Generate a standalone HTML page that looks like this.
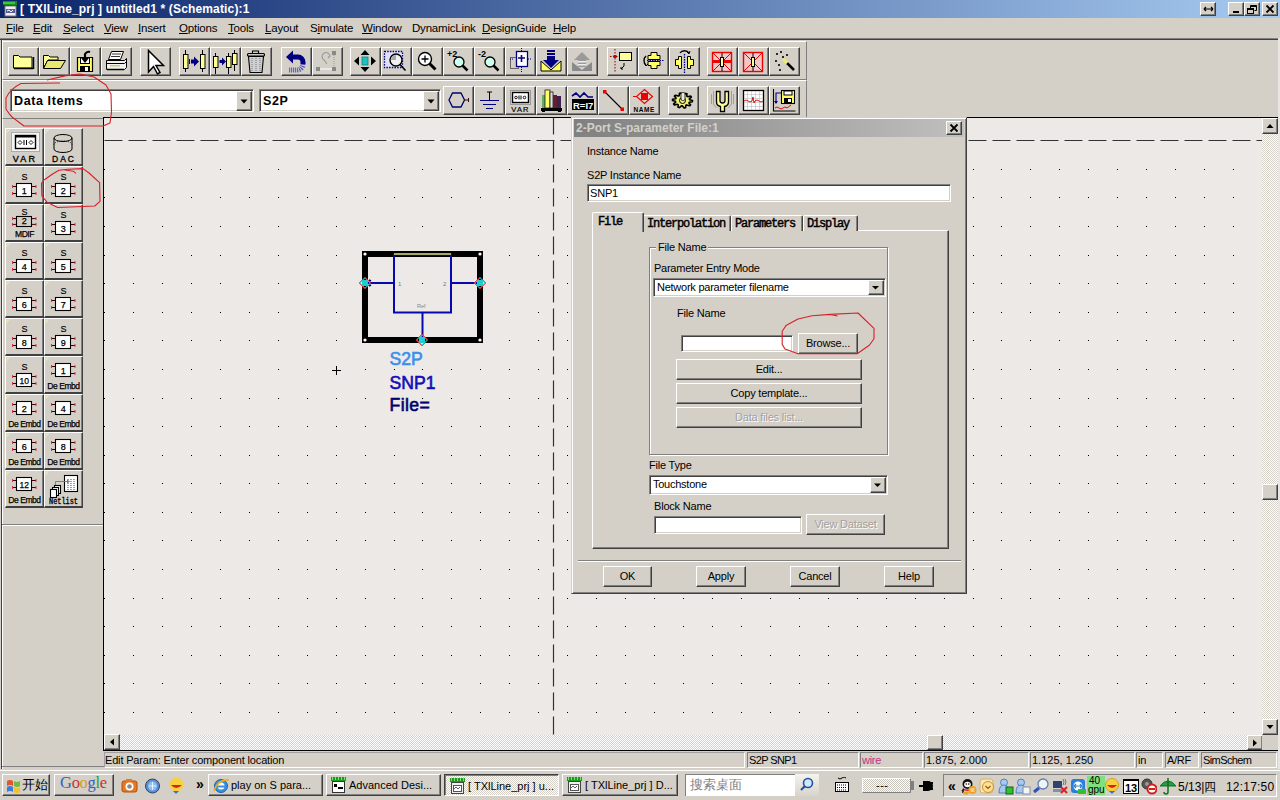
<!DOCTYPE html><html><head><meta charset="utf-8"><style>*{margin:0;padding:0;box-sizing:border-box}
html,body{width:1280px;height:800px;overflow:hidden;background:#D4D0C8;font-family:"Liberation Sans",sans-serif;font-size:11px;color:#000;position:relative}
.a{position:absolute}
u{text-decoration:underline;text-underline-offset:1px}
.sbtrack{background-color:#ECE9E6;background-image:repeating-conic-gradient(#fff 0 25%,#D4D0C8 0 50%);background-size:2px 2px}
</style></head><body><div class="a" style="left:0px;top:0px;width:1280px;height:18px;background:linear-gradient(to right,#0A246A,#A6CAF0);"></div><svg class="a" style="left:2px;top:1px;" width="16" height="16" viewBox="0 0 16 16"><rect x="1" y="0" width="14" height="4" fill="#1a8a1a"/><path d="M2,1 v2 M4,1 v2 M6,1 v2 M8,1 v2 M10,1 v2 M12,1 v2" stroke="#60ff60" stroke-width="1"/><rect x="3" y="5" width="11" height="10" fill="#eee" stroke="#777"/><rect x="4" y="8" width="9" height="4" fill="#5a5aa0"/><path d="M5,10 l2,-1 l2,2 l2,-2" stroke="#fff" fill="none"/></svg><div class="a" style="left:20px;top:3px;font-size:12px;color:#fff;white-space:nowrap;line-height:1;font-weight:bold;letter-spacing:0.15px">[ TXlLine_prj ] untitled1 * (Schematic):1</div><div class="a" style="left:1200px;top:2px;width:16px;height:14px;background:#D4D0C8;border-top:1px solid #fff;border-left:1px solid #fff;border-right:1px solid #404040;border-bottom:1px solid #404040;box-shadow:inset -1px -1px 0 #808080;"><svg class="a" style="left:1px;top:1px;" width="12" height="10" viewBox="0 0 12 10"><path d="M2,5 h9 M2,5 l2,-2 M2,5 l2,2 M11,5 l-2,-2 M11,5 l-2,2" stroke="#000" stroke-width="1.2" fill="none"/></svg></div><div class="a" style="left:1228px;top:2px;width:16px;height:14px;background:#D4D0C8;border-top:1px solid #fff;border-left:1px solid #fff;border-right:1px solid #404040;border-bottom:1px solid #404040;box-shadow:inset -1px -1px 0 #808080;"><svg class="a" style="left:1px;top:1px;" width="12" height="10" viewBox="0 0 12 10"><rect x="3" y="7" width="6" height="2" fill="#000"/></svg></div><div class="a" style="left:1244px;top:2px;width:16px;height:14px;background:#D4D0C8;border-top:1px solid #fff;border-left:1px solid #fff;border-right:1px solid #404040;border-bottom:1px solid #404040;box-shadow:inset -1px -1px 0 #808080;"><svg class="a" style="left:1px;top:1px;" width="12" height="10" viewBox="0 0 12 10"><path d="M4.5,1.5 h6 v5 h-2 M4.5,1.5 v2.5" stroke="#000" fill="none"/><rect x="4.5" y="1.5" width="6" height="1.5" fill="#000"/><rect x="1.5" y="4.5" width="6" height="5" fill="none" stroke="#000"/><rect x="1.5" y="4.5" width="6" height="1.5" fill="#000"/></svg></div><div class="a" style="left:1262px;top:2px;width:16px;height:14px;background:#D4D0C8;border-top:1px solid #fff;border-left:1px solid #fff;border-right:1px solid #404040;border-bottom:1px solid #404040;box-shadow:inset -1px -1px 0 #808080;"><svg class="a" style="left:1px;top:1px;" width="12" height="10" viewBox="0 0 12 10"><path d="M2.5,1.5 L9.5,8.5 M9.5,1.5 L2.5,8.5" stroke="#000" stroke-width="1.8"/></svg></div><div class="a" style="left:6px;top:23px;font-size:11.5px;color:#000;white-space:nowrap;line-height:1;letter-spacing:-0.2px"><u>F</u>ile</div><div class="a" style="left:33px;top:23px;font-size:11.5px;color:#000;white-space:nowrap;line-height:1;letter-spacing:-0.2px"><u>E</u>dit</div><div class="a" style="left:63px;top:23px;font-size:11.5px;color:#000;white-space:nowrap;line-height:1;letter-spacing:-0.2px"><u>S</u>elect</div><div class="a" style="left:104px;top:23px;font-size:11.5px;color:#000;white-space:nowrap;line-height:1;letter-spacing:-0.2px"><u>V</u>iew</div><div class="a" style="left:138px;top:23px;font-size:11.5px;color:#000;white-space:nowrap;line-height:1;letter-spacing:-0.2px"><u>I</u>nsert</div><div class="a" style="left:179px;top:23px;font-size:11.5px;color:#000;white-space:nowrap;line-height:1;letter-spacing:-0.2px"><u>O</u>ptions</div><div class="a" style="left:228px;top:23px;font-size:11.5px;color:#000;white-space:nowrap;line-height:1;letter-spacing:-0.2px"><u>T</u>ools</div><div class="a" style="left:265px;top:23px;font-size:11.5px;color:#000;white-space:nowrap;line-height:1;letter-spacing:-0.2px"><u>L</u>ayout</div><div class="a" style="left:310px;top:23px;font-size:11.5px;color:#000;white-space:nowrap;line-height:1;letter-spacing:-0.2px">S<u>i</u>mulate</div><div class="a" style="left:362px;top:23px;font-size:11.5px;color:#000;white-space:nowrap;line-height:1;letter-spacing:-0.2px"><u>W</u>indow</div><div class="a" style="left:412px;top:23px;font-size:11.5px;color:#000;white-space:nowrap;line-height:1;letter-spacing:-0.2px">DynamicLink</div><div class="a" style="left:482px;top:23px;font-size:11.5px;color:#000;white-space:nowrap;line-height:1;letter-spacing:-0.2px"><u>D</u>esignGuide</div><div class="a" style="left:553px;top:23px;font-size:11.5px;color:#000;white-space:nowrap;line-height:1;letter-spacing:-0.2px"><u>H</u>elp</div><div class="a" style="left:0px;top:38px;width:1278px;height:1px;background:#808080;"></div><div class="a" style="left:0px;top:39px;width:1278px;height:1px;background:#404040;"></div><div class="a" style="left:1278px;top:38px;width:2px;height:731px;background:#E8E6E2;"></div><div class="a" style="left:1px;top:39px;width:1px;height:730px;background:#404040;"></div><div class="a" style="left:2px;top:40px;width:1px;height:729px;background:#fff;"></div>
<div class="a" style="left:2px;top:41px;width:805px;height:39px;background:#D4D0C8;border-top:1px solid #fff;border-left:1px solid #fff;border-right:1px solid #404040;border-bottom:1px solid #404040;border-right:1px solid #808080;border-bottom:1px solid #808080;"></div><div class="a" style="left:2px;top:80px;width:805px;height:39px;background:#D4D0C8;border-top:1px solid #fff;border-left:1px solid #fff;border-right:1px solid #404040;border-bottom:1px solid #404040;border-right:1px solid #808080;border-bottom:1px solid #808080;"></div><div class="a" style="left:8px;top:47px;width:31px;height:29px;background:#D4D0C8;border-top:1px solid #fff;border-left:1px solid #fff;border-right:1px solid #404040;border-bottom:1px solid #404040;box-shadow:inset -1px -1px 0 #808080"></div><svg class="a" style="left:8px;top:47px;" width="31" height="29" viewBox="0 0 31 29"><path d="M5.5,8.5 h5 l1.5,1.5 h12 v11 h-18.5 z" fill="#FFFF99" stroke="#000"/><path d="M6,21.5 h19 M25.5,10 v12" stroke="#000" stroke-width="1.5"/></svg><div class="a" style="left:39px;top:47px;width:31px;height:29px;background:#D4D0C8;border-top:1px solid #fff;border-left:1px solid #fff;border-right:1px solid #404040;border-bottom:1px solid #404040;box-shadow:inset -1px -1px 0 #808080"></div><svg class="a" style="left:39px;top:47px;" width="31" height="29" viewBox="0 0 31 29"><path d="M4.5,8.5 h5 l1.5,1.5 h8 v3 h-10 l-4.5,8 z" fill="#FFFF99" stroke="#000"/><path d="M8.5,13.5 h18 l-5,8 h-17 z" fill="#E8E870" stroke="#000"/></svg><div class="a" style="left:70px;top:47px;width:31px;height:29px;background:#D4D0C8;border-top:1px solid #fff;border-left:1px solid #fff;border-right:1px solid #404040;border-bottom:1px solid #404040;box-shadow:inset -1px -1px 0 #808080"></div><svg class="a" style="left:70px;top:47px;" width="31" height="29" viewBox="0 0 31 29"><path d="M7.5,10.5 h15 v14 h-15 z" fill="#FFFF66" stroke="#000" stroke-width="1.2"/><rect x="10.5" y="10.5" width="9" height="6" fill="#fff" stroke="#000"/><rect x="10" y="19" width="10" height="6" fill="#000"/><rect x="15" y="20" width="3" height="4" fill="#fff"/><path d="M20,5 q-3,-1 -5,2 v5" stroke="#000" stroke-width="2.2" fill="none"/><path d="M11,11 l4,5 l4,-5 z" fill="#000"/></svg><div class="a" style="left:101px;top:47px;width:31px;height:29px;background:#D4D0C8;border-top:1px solid #fff;border-left:1px solid #fff;border-right:1px solid #404040;border-bottom:1px solid #404040;box-shadow:inset -1px -1px 0 #808080"></div><svg class="a" style="left:101px;top:47px;" width="31" height="29" viewBox="0 0 31 29"><path d="M10.5,4.5 h12 l-3,8 h-12 z" fill="#fff" stroke="#000"/><path d="M11,7 h9 M10,9.5 h9" stroke="#000" stroke-width="0.8"/><path d="M5.5,13.5 h18 l2,-2 v9 l-2,2 h-18 z" fill="#f0f0f0" stroke="#000"/><path d="M5.5,16.5 h18 l2,-2" stroke="#000" fill="none"/><rect x="9" y="18" width="10" height="1.5" fill="#c8c870"/><path d="M6,22.5 h17" stroke="#000" stroke-width="1.5"/></svg><div class="a" style="left:140px;top:47px;width:31px;height:29px;background:#D4D0C8;border-top:1px solid #fff;border-left:1px solid #fff;border-right:1px solid #404040;border-bottom:1px solid #404040;box-shadow:inset -1px -1px 0 #808080"></div><svg class="a" style="left:140px;top:47px;" width="31" height="29" viewBox="0 0 31 29"><path d="M8.5,3.5 V25 L13.5,19.5 L17.5,27 L20,25.5 L16,18.5 H23.5 Z" fill="#fff" stroke="#000" stroke-width="1.5" stroke-linejoin="miter"/></svg><div class="a" style="left:179px;top:47px;width:31px;height:29px;background:#D4D0C8;border-top:1px solid #fff;border-left:1px solid #fff;border-right:1px solid #404040;border-bottom:1px solid #404040;box-shadow:inset -1px -1px 0 #808080"></div><svg class="a" style="left:179px;top:47px;" width="31" height="29" viewBox="0 0 31 29"><path d="M6.5,3 v22 M23.5,3 v22" stroke="#000" stroke-width="1"/><rect x="4.5" y="7.5" width="4.5" height="14" fill="#FFFF99" stroke="#000"/><rect x="21.5" y="7.5" width="4.5" height="14" fill="#FFFF99" stroke="#000"/><path d="M10.5,12 v5" stroke="#000080" stroke-width="1"/><path d="M12,12.5 h3 v-3 l5,5 l-5,5 v-3 h-3 z" fill="#000080"/></svg><div class="a" style="left:210px;top:47px;width:31px;height:29px;background:#D4D0C8;border-top:1px solid #fff;border-left:1px solid #fff;border-right:1px solid #404040;border-bottom:1px solid #404040;box-shadow:inset -1px -1px 0 #808080"></div><svg class="a" style="left:210px;top:47px;" width="31" height="29" viewBox="0 0 31 29"><path d="M5.5,6 v21 M18.5,6 v21 M24.5,3 v21" stroke="#000" stroke-width="1"/><rect x="3.5" y="9.5" width="4.5" height="11" fill="#FFFF99" stroke="#000"/><rect x="16.5" y="9.5" width="4.5" height="11" fill="#FFFF99" stroke="#000"/><rect x="22.5" y="6.5" width="4.5" height="11" fill="#FFFF99" stroke="#000"/><path d="M9.5,13 h2.5 v-2.5 l4,4 l-4,4 v-2.5 h-2.5 z" fill="#000080"/></svg><div class="a" style="left:241px;top:47px;width:31px;height:29px;background:#D4D0C8;border-top:1px solid #fff;border-left:1px solid #fff;border-right:1px solid #404040;border-bottom:1px solid #404040;box-shadow:inset -1px -1px 0 #808080"></div><svg class="a" style="left:241px;top:47px;" width="31" height="29" viewBox="0 0 31 29"><path d="M11.5,6.5 v-2.5 h6 v2.5" fill="none" stroke="#000" stroke-width="1.1"/><rect x="6.5" y="6.5" width="17" height="2.5" rx="1" fill="#ccc" stroke="#000" stroke-width="1.1"/><path d="M7.5,9.5 h15 l-1.5,16 h-12 z" fill="#d0d0d0" stroke="#000" stroke-width="1.1"/><path d="M11,11 v13 M15,11 v13 M19,11 v13" stroke="#777" stroke-dasharray="1,1"/></svg><div class="a" style="left:281px;top:47px;width:31px;height:29px;background:#D4D0C8;border-top:1px solid #fff;border-left:1px solid #fff;border-right:1px solid #404040;border-bottom:1px solid #404040;box-shadow:inset -1px -1px 0 #808080"></div><svg class="a" style="left:281px;top:47px;" width="31" height="29" viewBox="0 0 31 29"><path d="M5,10 L12,3.5 V16.5 Z" fill="#000080"/><path d="M11,10 H17 A5,5 0 0 1 22,15 V17" stroke="#000080" stroke-width="5" fill="none"/><path d="M22,17 A6,6 0 0 1 16,23 H8" stroke="#5050B8" stroke-width="5" fill="none" stroke-dasharray="1,1"/></svg><div class="a" style="left:312px;top:47px;width:31px;height:29px;background:#D4D0C8;border-top:1px solid #fff;border-left:1px solid #fff;border-right:1px solid #404040;border-bottom:1px solid #404040;box-shadow:inset -1px -1px 0 #808080"></div><svg class="a" style="left:312px;top:47px;" width="31" height="29" viewBox="0 0 31 29"><rect x="20" y="4" width="4" height="4" fill="#888"/><rect x="4" y="20" width="4" height="4" fill="#888"/><rect x="20" y="20" width="4" height="4" fill="#888"/><path d="M8,22 h12" stroke="#fff" stroke-width="1"/><path d="M22,8 v12" stroke="#999" stroke-dasharray="1,1"/><path d="M15,17 l-3,-4 a4,4 0 1 1 6,-4 l-2,2" stroke="#999" fill="none" stroke-width="1.1"/></svg><div class="a" style="left:350px;top:47px;width:31px;height:29px;background:#D4D0C8;border-top:1px solid #fff;border-left:1px solid #fff;border-right:1px solid #404040;border-bottom:1px solid #404040;box-shadow:inset -1px -1px 0 #808080"></div><svg class="a" style="left:350px;top:47px;" width="31" height="29" viewBox="0 0 31 29"><rect x="12" y="10" width="6" height="8" fill="#20C0C0" stroke="#088" stroke-width="0.8"/><path d="M15,3 l-4.5,5 h9 z M15,25 l-4.5,-5 h9 z M4,14 l5,-4.5 v9 z M26,14 l-5,-4.5 v9 z" fill="#000"/></svg><div class="a" style="left:381px;top:47px;width:31px;height:29px;background:#D4D0C8;border-top:1px solid #fff;border-left:1px solid #fff;border-right:1px solid #404040;border-bottom:1px solid #404040;box-shadow:inset -1px -1px 0 #808080"></div><svg class="a" style="left:381px;top:47px;" width="31" height="29" viewBox="0 0 31 29"><rect x="3.5" y="4.5" width="18" height="16" fill="#E0E0F8" stroke="#000080" stroke-width="1.3" stroke-dasharray="1.5,1.2"/><circle cx="15" cy="13" r="6" fill="#f0f0f0" stroke="#000" stroke-width="1.4"/><path d="M15,8 a5,5 0 0 0 -5,5 h5 z" fill="#aaa"/><path d="M19,17.5 l5.5,6" stroke="#000" stroke-width="1.6"/></svg><div class="a" style="left:412px;top:47px;width:31px;height:29px;background:#D4D0C8;border-top:1px solid #fff;border-left:1px solid #fff;border-right:1px solid #404040;border-bottom:1px solid #404040;box-shadow:inset -1px -1px 0 #808080"></div><svg class="a" style="left:412px;top:47px;" width="31" height="29" viewBox="0 0 31 29"><circle cx="13" cy="12" r="6.5" fill="#fff" stroke="#000" stroke-width="1.4"/><path d="M9.5,12 h7 M13,8.5 v7" stroke="#000" stroke-width="1.3"/><path d="M17.5,16.5 l6,6" stroke="#000" stroke-width="3"/></svg><div class="a" style="left:443px;top:47px;width:31px;height:29px;background:#D4D0C8;border-top:1px solid #fff;border-left:1px solid #fff;border-right:1px solid #404040;border-bottom:1px solid #404040;box-shadow:inset -1px -1px 0 #808080"></div><svg class="a" style="left:443px;top:47px;" width="31" height="29" viewBox="0 0 31 29"><text x="4" y="10" font-size="9" font-family="Liberation Sans" font-weight="bold">+2</text><circle cx="16" cy="15" r="5" fill="#cfe" stroke="#000" stroke-width="1.3"/><path d="M19.5,18.5 l5,5" stroke="#000" stroke-width="2.5"/></svg><div class="a" style="left:474px;top:47px;width:31px;height:29px;background:#D4D0C8;border-top:1px solid #fff;border-left:1px solid #fff;border-right:1px solid #404040;border-bottom:1px solid #404040;box-shadow:inset -1px -1px 0 #808080"></div><svg class="a" style="left:474px;top:47px;" width="31" height="29" viewBox="0 0 31 29"><text x="4" y="10" font-size="9" font-family="Liberation Sans" font-weight="bold">-2</text><circle cx="16" cy="15" r="5" fill="#cfe" stroke="#000" stroke-width="1.3"/><path d="M19.5,18.5 l5,5" stroke="#000" stroke-width="2.5"/></svg><div class="a" style="left:505px;top:47px;width:31px;height:29px;background:#D4D0C8;border-top:1px solid #fff;border-left:1px solid #fff;border-right:1px solid #404040;border-bottom:1px solid #404040;box-shadow:inset -1px -1px 0 #808080"></div><svg class="a" style="left:505px;top:47px;" width="31" height="29" viewBox="0 0 31 29"><rect x="5.5" y="10.5" width="8" height="11" fill="none" stroke="#000" stroke-dasharray="1,1"/><rect x="11.5" y="4.5" width="11" height="15" fill="#fff" stroke="#000080" stroke-width="1.3"/><path d="M13,11 h7 M16.5,8 v7" stroke="#000080" stroke-width="1.6"/><path d="M5,12 h4 M16.5,1 v3 M16.5,20 v5 M23,12 h3" stroke="#000080" stroke-dasharray="1,1"/></svg><div class="a" style="left:536px;top:47px;width:31px;height:29px;background:#D4D0C8;border-top:1px solid #fff;border-left:1px solid #fff;border-right:1px solid #404040;border-bottom:1px solid #404040;box-shadow:inset -1px -1px 0 #808080"></div><svg class="a" style="left:536px;top:47px;" width="31" height="29" viewBox="0 0 31 29"><path d="M5,14 l10,9 l10,-9 v10 h-20 z" fill="#FFFF66" stroke="#000"/><rect x="11" y="3" width="8" height="2" fill="#000080"/><rect x="11" y="6" width="8" height="2" fill="#000080"/><path d="M11,9 h8 v4 h4 l-8,8 l-8,-8 h4 z" fill="#000080"/></svg><div class="a" style="left:567px;top:47px;width:31px;height:29px;background:#D4D0C8;border-top:1px solid #fff;border-left:1px solid #fff;border-right:1px solid #404040;border-bottom:1px solid #404040;box-shadow:inset -1px -1px 0 #808080"></div><svg class="a" style="left:567px;top:47px;" width="31" height="29" viewBox="0 0 31 29"><path d="M5,15 l10,8 l10,-8 v9 h-20 z" fill="#8a8a8a"/><path d="M11,20 h8 v-7 h4 l-8,-8 l-8,8 h4 z" fill="#9a9a9a"/><rect x="11" y="14" width="8" height="1.5" fill="#eee"/><rect x="11" y="17" width="8" height="1.5" fill="#eee"/></svg><div class="a" style="left:607px;top:47px;width:31px;height:29px;background:#D4D0C8;border-top:1px solid #fff;border-left:1px solid #fff;border-right:1px solid #404040;border-bottom:1px solid #404040;box-shadow:inset -1px -1px 0 #808080"></div><svg class="a" style="left:607px;top:47px;" width="31" height="29" viewBox="0 0 31 29"><path d="M8,2 v24" stroke="#800" stroke-dasharray="1.5,1.5"/><path d="M3,9.5 h9" stroke="#800" stroke-dasharray="1.5,1.5"/><rect x="6.5" y="8" width="3" height="3" fill="#c00"/><rect x="12.5" y="5.5" width="12" height="8" fill="#FFFF99" stroke="#000"/><path d="M17,16 v3 l-3,3 M14,20 v2 h2" stroke="#000" fill="none"/></svg><div class="a" style="left:638px;top:47px;width:31px;height:29px;background:#D4D0C8;border-top:1px solid #fff;border-left:1px solid #fff;border-right:1px solid #404040;border-bottom:1px solid #404040;box-shadow:inset -1px -1px 0 #808080"></div><svg class="a" style="left:638px;top:47px;" width="31" height="29" viewBox="0 0 31 29"><path d="M13,5.5 h6 v3 h3 v4 h-12 v-4 h3 z M13,21.5 h6 v-3 h3 v-4 h-12 v4 h3 z" fill="#FFFF66" stroke="#000"/><path d="M9,13.5 h17" stroke="#000080" stroke-dasharray="1.5,1"/><path d="M8,9 a6,6 0 0 0 0,9" stroke="#000" stroke-width="1.4" fill="none"/><path d="M6,16 l2,3 l2,-2" fill="none" stroke="#000"/></svg><div class="a" style="left:669px;top:47px;width:31px;height:29px;background:#D4D0C8;border-top:1px solid #fff;border-left:1px solid #fff;border-right:1px solid #404040;border-bottom:1px solid #404040;box-shadow:inset -1px -1px 0 #808080"></div><svg class="a" style="left:669px;top:47px;" width="31" height="29" viewBox="0 0 31 29"><path d="M6.5,12.5 h3 v-3 h3 v12 h-3 v-3 h-3 z M24.5,12.5 h-3 v-3 h-3 v12 h3 v-3 h3 z" fill="#FFFF66" stroke="#000"/><path d="M15.5,7 v19" stroke="#000080" stroke-width="1.3" stroke-dasharray="1.5,1"/><path d="M11,6 a5,4 0 0 1 9,0" stroke="#000" fill="none" stroke-width="1.3"/><path d="M18,5 l2,2 l1,-3" fill="none" stroke="#000"/></svg><div class="a" style="left:707px;top:47px;width:31px;height:29px;background:#D4D0C8;border-top:1px solid #fff;border-left:1px solid #fff;border-right:1px solid #404040;border-bottom:1px solid #404040;box-shadow:inset -1px -1px 0 #808080"></div><svg class="a" style="left:707px;top:47px;" width="31" height="29" viewBox="0 0 31 29"><rect x="5.5" y="5.5" width="19" height="19" fill="#f0c8c8" stroke="#e00" stroke-width="1.4"/><path d="M6,6 L24,24 M24,6 L6,24" stroke="#e00"/><rect x="6" y="13" width="18" height="3" fill="#e00"/><path d="M15,6 v18" stroke="#000"/><rect x="13.5" y="10.5" width="3" height="9" fill="#FFFF99" stroke="#000"/></svg><div class="a" style="left:738px;top:47px;width:31px;height:29px;background:#D4D0C8;border-top:1px solid #fff;border-left:1px solid #fff;border-right:1px solid #404040;border-bottom:1px solid #404040;box-shadow:inset -1px -1px 0 #808080"></div><svg class="a" style="left:738px;top:47px;" width="31" height="29" viewBox="0 0 31 29"><rect x="5.5" y="5.5" width="19" height="19" fill="#f0c8c8" stroke="#e00" stroke-width="1.4"/><path d="M6,6 L24,24 M24,6 L6,24" stroke="#e00"/><path d="M15,6 v18" stroke="#000"/><rect x="13.5" y="10.5" width="3" height="9" fill="#FFFF99" stroke="#000"/></svg><div class="a" style="left:769px;top:47px;width:31px;height:29px;background:#D4D0C8;border-top:1px solid #fff;border-left:1px solid #fff;border-right:1px solid #404040;border-bottom:1px solid #404040;box-shadow:inset -1px -1px 0 #808080"></div><svg class="a" style="left:769px;top:47px;" width="31" height="29" viewBox="0 0 31 29"><path d="M18,16 l7,7" stroke="#000" stroke-width="2.5"/><path d="M14,12 l4,4" stroke="#ee6" stroke-width="3"/><path d="M8,6 l1,1 l-1,1 l-1,-1 z M12,4 l1,1 l-1,1 l-1,-1 z M18,7 l1,1 l-1,1 l-1,-1 z M7,13 l1,1 l-1,1 l-1,-1 z M10,17 l1,1 l-1,1 l-1,-1 z M11,22 l1,1 l-1,1 l-1,-1 z M14,9 l1,1 l-1,1 l-1,-1 z" fill="none" stroke="#000" stroke-width="0.8"/></svg><div class="a" style="left:10px;top:89px;width:244px;height:23px;background:#fff;border-top:1px solid #808080;border-left:1px solid #808080;border-right:1px solid #fff;border-bottom:1px solid #fff;box-shadow:inset 1px 1px 0 #404040,inset -1px -1px 0 #D4D0C8;"></div><div class="a" style="left:14px;top:95px;font-size:12.5px;color:#000;white-space:nowrap;line-height:1;font-weight:bold;letter-spacing:0.6px">Data Items</div><div class="a" style="left:236px;top:91px;width:16px;height:20px;background:#D4D0C8;border-top:1px solid #fff;border-left:1px solid #fff;border-right:1px solid #404040;border-bottom:1px solid #404040;box-shadow:inset -1px -1px 0 #808080;"></div><svg class="a" style="left:236px;top:91px;" width="16" height="20" viewBox="0 0 16 20"><path d="M4.5,8.5 h7 l-3.5,4 z" fill="#000"/></svg><div class="a" style="left:259px;top:89px;width:182px;height:23px;background:#fff;border-top:1px solid #808080;border-left:1px solid #808080;border-right:1px solid #fff;border-bottom:1px solid #fff;box-shadow:inset 1px 1px 0 #404040,inset -1px -1px 0 #D4D0C8;"></div><div class="a" style="left:263px;top:95px;font-size:12.5px;color:#000;white-space:nowrap;line-height:1;font-weight:bold;letter-spacing:0.6px">S2P</div><div class="a" style="left:423px;top:91px;width:16px;height:20px;background:#D4D0C8;border-top:1px solid #fff;border-left:1px solid #fff;border-right:1px solid #404040;border-bottom:1px solid #404040;box-shadow:inset -1px -1px 0 #808080;"></div><svg class="a" style="left:423px;top:91px;" width="16" height="20" viewBox="0 0 16 20"><path d="M4.5,8.5 h7 l-3.5,4 z" fill="#000"/></svg><div class="a" style="left:443px;top:86px;width:31px;height:29px;background:#D4D0C8;border-top:1px solid #fff;border-left:1px solid #fff;border-right:1px solid #404040;border-bottom:1px solid #404040;box-shadow:inset -1px -1px 0 #808080"></div><svg class="a" style="left:443px;top:86px;" width="31" height="29" viewBox="0 0 31 29"><path d="M9.5,7 h8.5 l3.5,7 l-3.5,7 h-8.5 l-3.5,-7 z" fill="none" stroke="#000070" stroke-width="1.3"/><path d="M21.5,14 h4 M25.5,12 v4" stroke="#400" stroke-width="1"/></svg><div class="a" style="left:474px;top:86px;width:31px;height:29px;background:#D4D0C8;border-top:1px solid #fff;border-left:1px solid #fff;border-right:1px solid #404040;border-bottom:1px solid #404040;box-shadow:inset -1px -1px 0 #808080"></div><svg class="a" style="left:474px;top:86px;" width="31" height="29" viewBox="0 0 31 29"><path d="M15.5,6 v8 M13,6 h5" stroke="#000" stroke-width="1"/><path d="M6,14.5 h19 M9,18.5 h13 M12,22.5 h7" stroke="#000080" stroke-width="1.2"/></svg><div class="a" style="left:505px;top:86px;width:31px;height:29px;background:#D4D0C8;border-top:1px solid #fff;border-left:1px solid #fff;border-right:1px solid #404040;border-bottom:1px solid #404040;box-shadow:inset -1px -1px 0 #808080"></div><svg class="a" style="left:505px;top:86px;" width="31" height="29" viewBox="0 0 31 29"><rect x="5.5" y="4.5" width="20" height="14" fill="#ddd" stroke="#999"/><rect x="7.5" y="6.5" width="16" height="10" fill="#fff" stroke="#000" stroke-width="1.4"/><circle cx="11" cy="11.5" r="1.3" fill="none" stroke="#000" stroke-width="0.9"/><path d="M14,9.5 v4 M16,9.5 v4" stroke="#000" stroke-width="1"/><circle cx="19.5" cy="11.5" r="1.3" fill="none" stroke="#000" stroke-width="0.9"/><text x="15.5" y="26" font-size="7.5" font-family="Liberation Sans" text-anchor="middle" letter-spacing="1.2" stroke="#000" stroke-width="0.2">VAR</text></svg><div class="a" style="left:536px;top:86px;width:31px;height:29px;background:#D4D0C8;border-top:1px solid #fff;border-left:1px solid #fff;border-right:1px solid #404040;border-bottom:1px solid #404040;box-shadow:inset -1px -1px 0 #808080"></div><svg class="a" style="left:536px;top:86px;" width="31" height="29" viewBox="0 0 31 29"><rect x="5" y="22" width="21" height="3" fill="#000"/><rect x="6" y="24" width="3" height="2" fill="#000"/><rect x="22" y="24" width="3" height="2" fill="#000"/><rect x="6" y="9" width="3" height="13" fill="#6a6" /><rect x="9" y="4" width="5" height="18" fill="#FFFF66" stroke="#000" stroke-width="0.7"/><rect x="14" y="6" width="3" height="16" fill="#ddd" stroke="#000" stroke-width="0.7"/><rect x="17" y="9" width="4" height="13" fill="#602030"/><rect x="21" y="10" width="4" height="12" fill="#402050"/></svg><div class="a" style="left:567px;top:86px;width:31px;height:29px;background:#D4D0C8;border-top:1px solid #fff;border-left:1px solid #fff;border-right:1px solid #404040;border-bottom:1px solid #404040;box-shadow:inset -1px -1px 0 #808080"></div><svg class="a" style="left:567px;top:86px;" width="31" height="29" viewBox="0 0 31 29"><path d="M5,10 l4,-3 l4,4 l4,-4 l4,4 h5" stroke="#000080" stroke-width="1.6" fill="none"/><rect x="5" y="13" width="22" height="11" fill="#000"/><text x="6" y="22.5" font-size="9.5" font-family="Liberation Sans" fill="#fff" font-weight="bold">R=I7</text></svg><div class="a" style="left:598px;top:86px;width:31px;height:29px;background:#D4D0C8;border-top:1px solid #fff;border-left:1px solid #fff;border-right:1px solid #404040;border-bottom:1px solid #404040;box-shadow:inset -1px -1px 0 #808080"></div><svg class="a" style="left:598px;top:86px;" width="31" height="29" viewBox="0 0 31 29"><path d="M7,6 L24,23" stroke="#000" stroke-width="1.1"/><rect x="5" y="4" width="3.5" height="3.5" fill="#e00"/><rect x="22.5" y="21.5" width="3.5" height="3.5" fill="#e00"/></svg><div class="a" style="left:629px;top:86px;width:31px;height:29px;background:#D4D0C8;border-top:1px solid #fff;border-left:1px solid #fff;border-right:1px solid #404040;border-bottom:1px solid #404040;box-shadow:inset -1px -1px 0 #808080"></div><svg class="a" style="left:629px;top:86px;" width="31" height="29" viewBox="0 0 31 29"><path d="M15.5,3.5 l8,7 l-8,7 l-8,-7 z" fill="none" stroke="#e00" stroke-width="1.1"/><path d="M4,10.5 h4" stroke="#e00"/><rect x="12" y="7" width="7" height="7" fill="#e00"/><text x="4.5" y="26" font-size="6.5" font-family="Liberation Sans" font-weight="bold" letter-spacing="0.6">NAME</text></svg><div class="a" style="left:668px;top:86px;width:31px;height:29px;background:#D4D0C8;border-top:1px solid #fff;border-left:1px solid #fff;border-right:1px solid #404040;border-bottom:1px solid #404040;box-shadow:inset -1px -1px 0 #808080"></div><svg class="a" style="left:668px;top:86px;" width="31" height="29" viewBox="0 0 31 29"><path d="M24.5,14.5 L24.4,15.7 L21.3,16.2 L20.9,17.0 L22.6,18.9 L21.6,19.8 L18.7,18.9 L17.8,19.3 L17.6,21.6 L16.1,21.9 L14.5,19.9 L13.4,19.8 L11.4,21.6 L10.0,21.2 L10.3,18.9 L9.4,18.3 L6.4,18.9 L5.6,17.9 L7.7,16.2 L7.4,15.3 L4.5,14.5 L4.6,13.3 L7.7,12.8 L8.1,12.0 L6.4,10.1 L7.4,9.2 L10.3,10.1 L11.2,9.7 L11.4,7.4 L12.9,7.1 L14.5,9.1 L15.6,9.2 L17.6,7.4 L19.0,7.8 L18.7,10.1 L19.6,10.7 L22.6,10.1 L23.4,11.1 L21.3,12.8 L21.6,13.7 Z" fill="#F0F080" stroke="#000" stroke-width="1.6" stroke-linejoin="round"/><circle cx="14.5" cy="14.5" r="3" fill="none" stroke="#000" stroke-width="1"/><rect x="13" y="6.5" width="4" height="8" rx="1.5" fill="#e8e8e8" stroke="#000" stroke-width="0.8"/></svg><div class="a" style="left:707px;top:86px;width:31px;height:29px;background:#D4D0C8;border-top:1px solid #fff;border-left:1px solid #fff;border-right:1px solid #404040;border-bottom:1px solid #404040;box-shadow:inset -1px -1px 0 #808080"></div><svg class="a" style="left:707px;top:86px;" width="31" height="29" viewBox="0 0 31 29"><path d="M6.5,5 v13 l3,4 M24.5,5 v13 l-3,4 M4.5,8 v10 M26.5,8 v10" stroke="#999" fill="none" stroke-width="0.9"/><path d="M9.5,5.5 h3.5 v9 a2.5,2.5 0 0 0 5,0 v-9 h3.5 v10 a5,5 0 0 1 -4,5 v5 h-4 v-5 a5,5 0 0 1 -4,-5 z" fill="#FFFF99" stroke="#000" stroke-width="1.3"/></svg><div class="a" style="left:738px;top:86px;width:31px;height:29px;background:#D4D0C8;border-top:1px solid #fff;border-left:1px solid #fff;border-right:1px solid #404040;border-bottom:1px solid #404040;box-shadow:inset -1px -1px 0 #808080"></div><svg class="a" style="left:738px;top:86px;" width="31" height="29" viewBox="0 0 31 29"><rect x="5.5" y="4.5" width="20" height="20" fill="#fff" stroke="#000" stroke-width="1.3"/><path d="M9.5,5 v19 M6,8.5 h19" stroke="#bbb" stroke-width="0.6"/><path d="M13.5,5 v19 M6,12.5 h19" stroke="#bbb" stroke-width="0.6"/><path d="M17.5,5 v19 M6,16.5 h19" stroke="#bbb" stroke-width="0.6"/><path d="M21.5,5 v19 M6,20.5 h19" stroke="#bbb" stroke-width="0.6"/><path d="M6,15 q2,-2 4,0 t4,0 l1,-4 l1,6 l1,-2 q2,-2 4,0 t4,0" stroke="#c00" fill="none" stroke-width="0.9"/></svg><div class="a" style="left:769px;top:86px;width:31px;height:29px;background:#D4D0C8;border-top:1px solid #fff;border-left:1px solid #fff;border-right:1px solid #404040;border-bottom:1px solid #404040;box-shadow:inset -1px -1px 0 #808080"></div><svg class="a" style="left:769px;top:86px;" width="31" height="29" viewBox="0 0 31 29"><path d="M4.5,3 v22 h22" stroke="#000" fill="none" stroke-width="1.1"/><path d="M13,7 h-6 v10" stroke="#000080" fill="none" stroke-width="1.1"/><path d="M5,15 l2,3 l2,-3" fill="#000080"/><rect x="12.5" y="4.5" width="13" height="13" fill="#FFFF66" stroke="#000" stroke-width="1.1"/><rect x="15" y="5" width="8" height="4" fill="#fff" stroke="#000"/><rect x="15" y="12" width="8" height="5" fill="#000"/><rect x="19" y="13" width="3" height="3" fill="#fff"/><path d="M6,22 q2,-2 4,0 t4,0 t4,0 l4,-3" stroke="#e00" fill="none"/></svg>
<div class="a" style="left:5px;top:128px;width:39px;height:38px;background:#D4D0C8;border-top:1px solid #fff;border-left:1px solid #fff;border-right:1px solid #404040;border-bottom:2px solid #404040;box-shadow:inset -1px 0 0 #808080"></div><svg class="a" style="left:5px;top:128px;" width="39" height="38" viewBox="0 0 39 38"><path d="M1.5,1.5 h4 l-4,4 z" fill="#E4E4B8"/><rect x="6.5" y="4.5" width="28" height="19" fill="#f4f4f4" stroke="#aaa"/><rect x="10.5" y="7.5" width="20" height="13" fill="#fff" stroke="#000" stroke-width="1.4"/><rect x="10" y="7" width="21" height="2.5" fill="#000"/><path d="M13,14.5 l2,-2 l2,2 l-2,2 z M24,14.5 l2,-2 l2,2 l-2,2 z" fill="none" stroke="#000" stroke-width="0.9"/><path d="M19,12 v5 M21.5,12 v5" stroke="#000" stroke-width="1"/><text x="20" y="33.5" font-size="9" font-family="Liberation Sans" text-anchor="middle" letter-spacing="2.2" stroke="#000" stroke-width="0.35">VAR</text></svg><div class="a" style="left:44px;top:128px;width:39px;height:38px;background:#D4D0C8;border-top:1px solid #fff;border-left:1px solid #fff;border-right:1px solid #404040;border-bottom:2px solid #404040;box-shadow:inset -1px 0 0 #808080"></div><svg class="a" style="left:44px;top:128px;" width="39" height="38" viewBox="0 0 39 38"><path d="M1.5,1.5 h4 l-4,4 z" fill="#E4E4B8"/><ellipse cx="19" cy="10" rx="9" ry="3.5" fill="none" stroke="#000" stroke-width="1"/><path d="M10,10 v11 a9,3.5 0 0 0 18,0 v-11" fill="none" stroke="#000" stroke-width="1"/><path d="M10,16.5 a9,3.5 0 0 1 18,0" fill="none" stroke="#000" stroke-dasharray="1,1.2" stroke-width="0.9"/><text x="20" y="33.5" font-size="8.5" font-family="Liberation Sans" text-anchor="middle" letter-spacing="2" stroke="#000" stroke-width="0.3">DAC</text></svg><div class="a" style="left:5px;top:166px;width:39px;height:38px;background:#D4D0C8;border-top:1px solid #fff;border-left:1px solid #fff;border-right:1px solid #404040;border-bottom:2px solid #404040;box-shadow:inset -1px 0 0 #808080"></div><svg class="a" style="left:5px;top:166px;" width="39" height="38" viewBox="0 0 39 38"><path d="M1.5,1.5 h4 l-4,4 z" fill="#E4E4B8"/><text x="19.5" y="13.5" font-size="9" font-family="Liberation Sans" text-anchor="middle" stroke="#000" stroke-width="0.15">S</text><path d="M7.5,20.5 h4 M7.5,27.5 h4 M27,20.5 h4 M27,27.5 h4" stroke="#400" stroke-width="1"/><path d="M7.5,19.0 v3 M7.5,26.0 v3 M31,19.0 v3 M31,26.0 v3" stroke="#d03050" stroke-width="1"/><rect x="11.5" y="17.5" width="15" height="13" fill="#fff" stroke="#000" stroke-width="1.1"/><text x="19.2" y="27.5" font-size="9" font-family="Liberation Sans" text-anchor="middle" stroke="#000" stroke-width="0.25">1</text></svg><div class="a" style="left:44px;top:166px;width:39px;height:38px;background:#D4D0C8;border-top:1px solid #fff;border-left:1px solid #fff;border-right:1px solid #404040;border-bottom:2px solid #404040;box-shadow:inset -1px 0 0 #808080"></div><svg class="a" style="left:44px;top:166px;" width="39" height="38" viewBox="0 0 39 38"><path d="M1.5,1.5 h4 l-4,4 z" fill="#E4E4B8"/><text x="19.5" y="13.5" font-size="9" font-family="Liberation Sans" text-anchor="middle" stroke="#000" stroke-width="0.15">S</text><path d="M7.5,20.5 h4 M7.5,27.5 h4 M27,20.5 h4 M27,27.5 h4" stroke="#400" stroke-width="1"/><path d="M7.5,19.0 v3 M7.5,26.0 v3 M31,19.0 v3 M31,26.0 v3" stroke="#d03050" stroke-width="1"/><rect x="11.5" y="17.5" width="15" height="13" fill="#fff" stroke="#000" stroke-width="1.1"/><text x="19.2" y="27.5" font-size="9" font-family="Liberation Sans" text-anchor="middle" stroke="#000" stroke-width="0.25">2</text></svg><div class="a" style="left:5px;top:204px;width:39px;height:38px;background:#D4D0C8;border-top:1px solid #fff;border-left:1px solid #fff;border-right:1px solid #404040;border-bottom:2px solid #404040;box-shadow:inset -1px 0 0 #808080"></div><svg class="a" style="left:5px;top:204px;" width="39" height="38" viewBox="0 0 39 38"><path d="M1.5,1.5 h4 l-4,4 z" fill="#E4E4B8"/><text x="19.5" y="10.5" font-size="9" font-family="Liberation Sans" text-anchor="middle" stroke="#000" stroke-width="0.15">S</text><path d="M7.5,14.6 h4 M7.5,20.4 h4 M27,14.6 h4 M27,20.4 h4" stroke="#400" stroke-width="1"/><path d="M7.5,13.1 v3 M7.5,18.9 v3 M31,13.1 v3 M31,18.9 v3" stroke="#d03050" stroke-width="1"/><rect x="11.5" y="12.5" width="15" height="10" fill="none" stroke="#000" stroke-width="1.1"/><text x="19.2" y="19.5" font-size="9" font-family="Liberation Sans" text-anchor="middle" stroke="#000" stroke-width="0.25">2</text><text x="19.5" y="33" font-size="8.5" font-family="Liberation Sans" text-anchor="middle" letter-spacing="-0.45" stroke="#000" stroke-width="0.25">MDIF</text></svg><div class="a" style="left:44px;top:204px;width:39px;height:38px;background:#D4D0C8;border-top:1px solid #fff;border-left:1px solid #fff;border-right:1px solid #404040;border-bottom:2px solid #404040;box-shadow:inset -1px 0 0 #808080"></div><svg class="a" style="left:44px;top:204px;" width="39" height="38" viewBox="0 0 39 38"><path d="M1.5,1.5 h4 l-4,4 z" fill="#E4E4B8"/><text x="19.5" y="13.5" font-size="9" font-family="Liberation Sans" text-anchor="middle" stroke="#000" stroke-width="0.15">S</text><path d="M7.5,20.5 h4 M7.5,27.5 h4 M27,20.5 h4 M27,27.5 h4" stroke="#400" stroke-width="1"/><path d="M7.5,19.0 v3 M7.5,26.0 v3 M31,19.0 v3 M31,26.0 v3" stroke="#d03050" stroke-width="1"/><rect x="11.5" y="17.5" width="15" height="13" fill="#fff" stroke="#000" stroke-width="1.1"/><text x="19.2" y="27.5" font-size="9" font-family="Liberation Sans" text-anchor="middle" stroke="#000" stroke-width="0.25">3</text></svg><div class="a" style="left:5px;top:242px;width:39px;height:38px;background:#D4D0C8;border-top:1px solid #fff;border-left:1px solid #fff;border-right:1px solid #404040;border-bottom:2px solid #404040;box-shadow:inset -1px 0 0 #808080"></div><svg class="a" style="left:5px;top:242px;" width="39" height="38" viewBox="0 0 39 38"><path d="M1.5,1.5 h4 l-4,4 z" fill="#E4E4B8"/><text x="19.5" y="13.5" font-size="9" font-family="Liberation Sans" text-anchor="middle" stroke="#000" stroke-width="0.15">S</text><path d="M7.5,20.5 h4 M7.5,27.5 h4 M27,20.5 h4 M27,27.5 h4" stroke="#400" stroke-width="1"/><path d="M7.5,19.0 v3 M7.5,26.0 v3 M31,19.0 v3 M31,26.0 v3" stroke="#d03050" stroke-width="1"/><rect x="11.5" y="17.5" width="15" height="13" fill="#fff" stroke="#000" stroke-width="1.1"/><text x="19.2" y="27.5" font-size="9" font-family="Liberation Sans" text-anchor="middle" stroke="#000" stroke-width="0.25">4</text></svg><div class="a" style="left:44px;top:242px;width:39px;height:38px;background:#D4D0C8;border-top:1px solid #fff;border-left:1px solid #fff;border-right:1px solid #404040;border-bottom:2px solid #404040;box-shadow:inset -1px 0 0 #808080"></div><svg class="a" style="left:44px;top:242px;" width="39" height="38" viewBox="0 0 39 38"><path d="M1.5,1.5 h4 l-4,4 z" fill="#E4E4B8"/><text x="19.5" y="13.5" font-size="9" font-family="Liberation Sans" text-anchor="middle" stroke="#000" stroke-width="0.15">S</text><path d="M7.5,20.5 h4 M7.5,27.5 h4 M27,20.5 h4 M27,27.5 h4" stroke="#400" stroke-width="1"/><path d="M7.5,19.0 v3 M7.5,26.0 v3 M31,19.0 v3 M31,26.0 v3" stroke="#d03050" stroke-width="1"/><rect x="11.5" y="17.5" width="15" height="13" fill="#fff" stroke="#000" stroke-width="1.1"/><text x="19.2" y="27.5" font-size="9" font-family="Liberation Sans" text-anchor="middle" stroke="#000" stroke-width="0.25">5</text></svg><div class="a" style="left:5px;top:280px;width:39px;height:38px;background:#D4D0C8;border-top:1px solid #fff;border-left:1px solid #fff;border-right:1px solid #404040;border-bottom:2px solid #404040;box-shadow:inset -1px 0 0 #808080"></div><svg class="a" style="left:5px;top:280px;" width="39" height="38" viewBox="0 0 39 38"><path d="M1.5,1.5 h4 l-4,4 z" fill="#E4E4B8"/><text x="19.5" y="13.5" font-size="9" font-family="Liberation Sans" text-anchor="middle" stroke="#000" stroke-width="0.15">S</text><path d="M7.5,20.5 h4 M7.5,27.5 h4 M27,20.5 h4 M27,27.5 h4" stroke="#400" stroke-width="1"/><path d="M7.5,19.0 v3 M7.5,26.0 v3 M31,19.0 v3 M31,26.0 v3" stroke="#d03050" stroke-width="1"/><rect x="11.5" y="17.5" width="15" height="13" fill="#fff" stroke="#000" stroke-width="1.1"/><text x="19.2" y="27.5" font-size="9" font-family="Liberation Sans" text-anchor="middle" stroke="#000" stroke-width="0.25">6</text></svg><div class="a" style="left:44px;top:280px;width:39px;height:38px;background:#D4D0C8;border-top:1px solid #fff;border-left:1px solid #fff;border-right:1px solid #404040;border-bottom:2px solid #404040;box-shadow:inset -1px 0 0 #808080"></div><svg class="a" style="left:44px;top:280px;" width="39" height="38" viewBox="0 0 39 38"><path d="M1.5,1.5 h4 l-4,4 z" fill="#E4E4B8"/><text x="19.5" y="13.5" font-size="9" font-family="Liberation Sans" text-anchor="middle" stroke="#000" stroke-width="0.15">S</text><path d="M7.5,20.5 h4 M7.5,27.5 h4 M27,20.5 h4 M27,27.5 h4" stroke="#400" stroke-width="1"/><path d="M7.5,19.0 v3 M7.5,26.0 v3 M31,19.0 v3 M31,26.0 v3" stroke="#d03050" stroke-width="1"/><rect x="11.5" y="17.5" width="15" height="13" fill="#fff" stroke="#000" stroke-width="1.1"/><text x="19.2" y="27.5" font-size="9" font-family="Liberation Sans" text-anchor="middle" stroke="#000" stroke-width="0.25">7</text></svg><div class="a" style="left:5px;top:318px;width:39px;height:38px;background:#D4D0C8;border-top:1px solid #fff;border-left:1px solid #fff;border-right:1px solid #404040;border-bottom:2px solid #404040;box-shadow:inset -1px 0 0 #808080"></div><svg class="a" style="left:5px;top:318px;" width="39" height="38" viewBox="0 0 39 38"><path d="M1.5,1.5 h4 l-4,4 z" fill="#E4E4B8"/><text x="19.5" y="13.5" font-size="9" font-family="Liberation Sans" text-anchor="middle" stroke="#000" stroke-width="0.15">S</text><path d="M7.5,20.5 h4 M7.5,27.5 h4 M27,20.5 h4 M27,27.5 h4" stroke="#400" stroke-width="1"/><path d="M7.5,19.0 v3 M7.5,26.0 v3 M31,19.0 v3 M31,26.0 v3" stroke="#d03050" stroke-width="1"/><rect x="11.5" y="17.5" width="15" height="13" fill="#fff" stroke="#000" stroke-width="1.1"/><text x="19.2" y="27.5" font-size="9" font-family="Liberation Sans" text-anchor="middle" stroke="#000" stroke-width="0.25">8</text></svg><div class="a" style="left:44px;top:318px;width:39px;height:38px;background:#D4D0C8;border-top:1px solid #fff;border-left:1px solid #fff;border-right:1px solid #404040;border-bottom:2px solid #404040;box-shadow:inset -1px 0 0 #808080"></div><svg class="a" style="left:44px;top:318px;" width="39" height="38" viewBox="0 0 39 38"><path d="M1.5,1.5 h4 l-4,4 z" fill="#E4E4B8"/><text x="19.5" y="13.5" font-size="9" font-family="Liberation Sans" text-anchor="middle" stroke="#000" stroke-width="0.15">S</text><path d="M7.5,20.5 h4 M7.5,27.5 h4 M27,20.5 h4 M27,27.5 h4" stroke="#400" stroke-width="1"/><path d="M7.5,19.0 v3 M7.5,26.0 v3 M31,19.0 v3 M31,26.0 v3" stroke="#d03050" stroke-width="1"/><rect x="11.5" y="17.5" width="15" height="13" fill="#fff" stroke="#000" stroke-width="1.1"/><text x="19.2" y="27.5" font-size="9" font-family="Liberation Sans" text-anchor="middle" stroke="#000" stroke-width="0.25">9</text></svg><div class="a" style="left:5px;top:356px;width:39px;height:38px;background:#D4D0C8;border-top:1px solid #fff;border-left:1px solid #fff;border-right:1px solid #404040;border-bottom:2px solid #404040;box-shadow:inset -1px 0 0 #808080"></div><svg class="a" style="left:5px;top:356px;" width="39" height="38" viewBox="0 0 39 38"><path d="M1.5,1.5 h4 l-4,4 z" fill="#E4E4B8"/><text x="19.5" y="13.5" font-size="9" font-family="Liberation Sans" text-anchor="middle" stroke="#000" stroke-width="0.15">S</text><path d="M7.5,20.5 h4 M7.5,27.5 h4 M27,20.5 h4 M27,27.5 h4" stroke="#400" stroke-width="1"/><path d="M7.5,19.0 v3 M7.5,26.0 v3 M31,19.0 v3 M31,26.0 v3" stroke="#d03050" stroke-width="1"/><rect x="11.5" y="17.5" width="15" height="13" fill="#fff" stroke="#000" stroke-width="1.1"/><text x="19.2" y="27.5" font-size="8.5" font-family="Liberation Sans" text-anchor="middle" stroke="#000" stroke-width="0.25">10</text></svg><div class="a" style="left:44px;top:356px;width:39px;height:38px;background:#D4D0C8;border-top:1px solid #fff;border-left:1px solid #fff;border-right:1px solid #404040;border-bottom:2px solid #404040;box-shadow:inset -1px 0 0 #808080"></div><svg class="a" style="left:44px;top:356px;" width="39" height="38" viewBox="0 0 39 38"><path d="M1.5,1.5 h4 l-4,4 z" fill="#E4E4B8"/><path d="M7.5,10.5 h4 M7.5,17.5 h4 M27,10.5 h4 M27,17.5 h4" stroke="#400" stroke-width="1"/><path d="M7.5,9.0 v3 M7.5,16.0 v3 M31,9.0 v3 M31,16.0 v3" stroke="#d03050" stroke-width="1"/><rect x="11.5" y="7.5" width="15" height="13" fill="#fff" stroke="#000" stroke-width="1.1"/><text x="19.2" y="17.5" font-size="9" font-family="Liberation Sans" text-anchor="middle" stroke="#000" stroke-width="0.25">1</text><text x="19.5" y="33" font-size="8.5" font-family="Liberation Sans" text-anchor="middle" letter-spacing="-0.45" stroke="#000" stroke-width="0.25">De Embd</text></svg><div class="a" style="left:5px;top:394px;width:39px;height:38px;background:#D4D0C8;border-top:1px solid #fff;border-left:1px solid #fff;border-right:1px solid #404040;border-bottom:2px solid #404040;box-shadow:inset -1px 0 0 #808080"></div><svg class="a" style="left:5px;top:394px;" width="39" height="38" viewBox="0 0 39 38"><path d="M1.5,1.5 h4 l-4,4 z" fill="#E4E4B8"/><path d="M7.5,10.5 h4 M7.5,17.5 h4 M27,10.5 h4 M27,17.5 h4" stroke="#400" stroke-width="1"/><path d="M7.5,9.0 v3 M7.5,16.0 v3 M31,9.0 v3 M31,16.0 v3" stroke="#d03050" stroke-width="1"/><rect x="11.5" y="7.5" width="15" height="13" fill="#fff" stroke="#000" stroke-width="1.1"/><text x="19.2" y="17.5" font-size="9" font-family="Liberation Sans" text-anchor="middle" stroke="#000" stroke-width="0.25">2</text><text x="19.5" y="33" font-size="8.5" font-family="Liberation Sans" text-anchor="middle" letter-spacing="-0.45" stroke="#000" stroke-width="0.25">De Embd</text></svg><div class="a" style="left:44px;top:394px;width:39px;height:38px;background:#D4D0C8;border-top:1px solid #fff;border-left:1px solid #fff;border-right:1px solid #404040;border-bottom:2px solid #404040;box-shadow:inset -1px 0 0 #808080"></div><svg class="a" style="left:44px;top:394px;" width="39" height="38" viewBox="0 0 39 38"><path d="M1.5,1.5 h4 l-4,4 z" fill="#E4E4B8"/><path d="M7.5,10.5 h4 M7.5,17.5 h4 M27,10.5 h4 M27,17.5 h4" stroke="#400" stroke-width="1"/><path d="M7.5,9.0 v3 M7.5,16.0 v3 M31,9.0 v3 M31,16.0 v3" stroke="#d03050" stroke-width="1"/><rect x="11.5" y="7.5" width="15" height="13" fill="#fff" stroke="#000" stroke-width="1.1"/><text x="19.2" y="17.5" font-size="9" font-family="Liberation Sans" text-anchor="middle" stroke="#000" stroke-width="0.25">4</text><text x="19.5" y="33" font-size="8.5" font-family="Liberation Sans" text-anchor="middle" letter-spacing="-0.45" stroke="#000" stroke-width="0.25">De Embd</text></svg><div class="a" style="left:5px;top:432px;width:39px;height:38px;background:#D4D0C8;border-top:1px solid #fff;border-left:1px solid #fff;border-right:1px solid #404040;border-bottom:2px solid #404040;box-shadow:inset -1px 0 0 #808080"></div><svg class="a" style="left:5px;top:432px;" width="39" height="38" viewBox="0 0 39 38"><path d="M1.5,1.5 h4 l-4,4 z" fill="#E4E4B8"/><path d="M7.5,10.5 h4 M7.5,17.5 h4 M27,10.5 h4 M27,17.5 h4" stroke="#400" stroke-width="1"/><path d="M7.5,9.0 v3 M7.5,16.0 v3 M31,9.0 v3 M31,16.0 v3" stroke="#d03050" stroke-width="1"/><rect x="11.5" y="7.5" width="15" height="13" fill="#fff" stroke="#000" stroke-width="1.1"/><text x="19.2" y="17.5" font-size="9" font-family="Liberation Sans" text-anchor="middle" stroke="#000" stroke-width="0.25">6</text><text x="19.5" y="33" font-size="8.5" font-family="Liberation Sans" text-anchor="middle" letter-spacing="-0.45" stroke="#000" stroke-width="0.25">De Embd</text></svg><div class="a" style="left:44px;top:432px;width:39px;height:38px;background:#D4D0C8;border-top:1px solid #fff;border-left:1px solid #fff;border-right:1px solid #404040;border-bottom:2px solid #404040;box-shadow:inset -1px 0 0 #808080"></div><svg class="a" style="left:44px;top:432px;" width="39" height="38" viewBox="0 0 39 38"><path d="M1.5,1.5 h4 l-4,4 z" fill="#E4E4B8"/><path d="M7.5,10.5 h4 M7.5,17.5 h4 M27,10.5 h4 M27,17.5 h4" stroke="#400" stroke-width="1"/><path d="M7.5,9.0 v3 M7.5,16.0 v3 M31,9.0 v3 M31,16.0 v3" stroke="#d03050" stroke-width="1"/><rect x="11.5" y="7.5" width="15" height="13" fill="#fff" stroke="#000" stroke-width="1.1"/><text x="19.2" y="17.5" font-size="9" font-family="Liberation Sans" text-anchor="middle" stroke="#000" stroke-width="0.25">8</text><text x="19.5" y="33" font-size="8.5" font-family="Liberation Sans" text-anchor="middle" letter-spacing="-0.45" stroke="#000" stroke-width="0.25">De Embd</text></svg><div class="a" style="left:5px;top:470px;width:39px;height:38px;background:#D4D0C8;border-top:1px solid #fff;border-left:1px solid #fff;border-right:1px solid #404040;border-bottom:2px solid #404040;box-shadow:inset -1px 0 0 #808080"></div><svg class="a" style="left:5px;top:470px;" width="39" height="38" viewBox="0 0 39 38"><path d="M1.5,1.5 h4 l-4,4 z" fill="#E4E4B8"/><path d="M7.5,10.5 h4 M7.5,17.5 h4 M27,10.5 h4 M27,17.5 h4" stroke="#400" stroke-width="1"/><path d="M7.5,9.0 v3 M7.5,16.0 v3 M31,9.0 v3 M31,16.0 v3" stroke="#d03050" stroke-width="1"/><rect x="11.5" y="7.5" width="15" height="13" fill="#fff" stroke="#000" stroke-width="1.1"/><text x="19.2" y="17.5" font-size="8.5" font-family="Liberation Sans" text-anchor="middle" stroke="#000" stroke-width="0.25">12</text><text x="19.5" y="33" font-size="8.5" font-family="Liberation Sans" text-anchor="middle" letter-spacing="-0.45" stroke="#000" stroke-width="0.25">De Embd</text></svg><div class="a" style="left:44px;top:470px;width:39px;height:38px;background:#D4D0C8;border-top:1px solid #fff;border-left:1px solid #fff;border-right:1px solid #404040;border-bottom:2px solid #404040;box-shadow:inset -1px 0 0 #808080"></div><svg class="a" style="left:44px;top:470px;" width="39" height="38" viewBox="0 0 39 38"><path d="M1.5,1.5 h4 l-4,4 z" fill="#E4E4B8"/><rect x="20.5" y="5.5" width="13" height="16" fill="#fff" stroke="#000" stroke-width="1.1"/><path d="M23,9.5 h8" stroke="#888" stroke-width="0.8" stroke-dasharray="2,1"/><path d="M23,11.5 h8" stroke="#888" stroke-width="0.8" stroke-dasharray="2,1"/><path d="M23,13.5 h8" stroke="#888" stroke-width="0.8" stroke-dasharray="2,1"/><path d="M23,15.5 h8" stroke="#888" stroke-width="0.8" stroke-dasharray="2,1"/><path d="M23,17.5 h8" stroke="#888" stroke-width="0.8" stroke-dasharray="2,1"/><path d="M23,19.5 h8" stroke="#888" stroke-width="0.8" stroke-dasharray="2,1"/><path d="M11.5,15 v-3.5 h12" stroke="#777" fill="none" stroke-width="0.9"/><path d="M23,9.5 l3,2 l-3,2 z" fill="#777"/><rect x="10.5" y="15.5" width="6" height="8" fill="#fff" stroke="#000" stroke-width="1.1"/><rect x="8.5" y="17.5" width="6" height="8" fill="#fff" stroke="#000" stroke-width="1.1"/><rect x="6.5" y="19.5" width="6" height="8" fill="#fff" stroke="#000" stroke-width="1.1"/><text x="19.5" y="33.5" font-size="9" font-family="Liberation Mono" text-anchor="middle" textLength="29" lengthAdjust="spacingAndGlyphs" stroke="#000" stroke-width="0.35">Netlist</text></svg><div class="a" style="left:2px;top:524px;width:101px;height:1px;background:#808080;"></div><div class="a" style="left:2px;top:525px;width:101px;height:1px;background:#fff;"></div>
<div class="a" style="left:103px;top:117px;width:1175px;height:1px;background:#000;"></div><div class="a" style="left:103px;top:117px;width:1px;height:634px;background:#000;"></div><div class="a" style="left:104px;top:118px;width:1158px;height:617px;background:#ECE9E6;"></div><svg class="a" style="left:104px;top:118px;" width="1158" height="617" viewBox="0 0 1158 617"><path d="M0,51h1v1h-1zM0,79h1v1h-1zM0,108h1v1h-1zM0,137h1v1h-1zM0,165h1v1h-1zM0,194h1v1h-1zM0,222h1v1h-1zM0,251h1v1h-1zM0,280h1v1h-1zM0,308h1v1h-1zM0,337h1v1h-1zM0,365h1v1h-1zM0,394h1v1h-1zM0,422h1v1h-1zM0,451h1v1h-1zM0,480h1v1h-1zM0,508h1v1h-1zM0,537h1v1h-1zM0,565h1v1h-1zM0,594h1v1h-1zM29,51h1v1h-1zM29,79h1v1h-1zM29,108h1v1h-1zM29,137h1v1h-1zM29,165h1v1h-1zM29,194h1v1h-1zM29,222h1v1h-1zM29,251h1v1h-1zM29,280h1v1h-1zM29,308h1v1h-1zM29,337h1v1h-1zM29,365h1v1h-1zM29,394h1v1h-1zM29,422h1v1h-1zM29,451h1v1h-1zM29,480h1v1h-1zM29,508h1v1h-1zM29,537h1v1h-1zM29,565h1v1h-1zM29,594h1v1h-1zM58,51h1v1h-1zM58,79h1v1h-1zM58,108h1v1h-1zM58,137h1v1h-1zM58,165h1v1h-1zM58,194h1v1h-1zM58,222h1v1h-1zM58,251h1v1h-1zM58,280h1v1h-1zM58,308h1v1h-1zM58,337h1v1h-1zM58,365h1v1h-1zM58,394h1v1h-1zM58,422h1v1h-1zM58,451h1v1h-1zM58,480h1v1h-1zM58,508h1v1h-1zM58,537h1v1h-1zM58,565h1v1h-1zM58,594h1v1h-1zM87,51h1v1h-1zM87,79h1v1h-1zM87,108h1v1h-1zM87,137h1v1h-1zM87,165h1v1h-1zM87,194h1v1h-1zM87,222h1v1h-1zM87,251h1v1h-1zM87,280h1v1h-1zM87,308h1v1h-1zM87,337h1v1h-1zM87,365h1v1h-1zM87,394h1v1h-1zM87,422h1v1h-1zM87,451h1v1h-1zM87,480h1v1h-1zM87,508h1v1h-1zM87,537h1v1h-1zM87,565h1v1h-1zM87,594h1v1h-1zM116,51h1v1h-1zM116,79h1v1h-1zM116,108h1v1h-1zM116,137h1v1h-1zM116,165h1v1h-1zM116,194h1v1h-1zM116,222h1v1h-1zM116,251h1v1h-1zM116,280h1v1h-1zM116,308h1v1h-1zM116,337h1v1h-1zM116,365h1v1h-1zM116,394h1v1h-1zM116,422h1v1h-1zM116,451h1v1h-1zM116,480h1v1h-1zM116,508h1v1h-1zM116,537h1v1h-1zM116,565h1v1h-1zM116,594h1v1h-1zM145,51h1v1h-1zM145,79h1v1h-1zM145,108h1v1h-1zM145,137h1v1h-1zM145,165h1v1h-1zM145,194h1v1h-1zM145,222h1v1h-1zM145,251h1v1h-1zM145,280h1v1h-1zM145,308h1v1h-1zM145,337h1v1h-1zM145,365h1v1h-1zM145,394h1v1h-1zM145,422h1v1h-1zM145,451h1v1h-1zM145,480h1v1h-1zM145,508h1v1h-1zM145,537h1v1h-1zM145,565h1v1h-1zM145,594h1v1h-1zM174,51h1v1h-1zM174,79h1v1h-1zM174,108h1v1h-1zM174,137h1v1h-1zM174,165h1v1h-1zM174,194h1v1h-1zM174,222h1v1h-1zM174,251h1v1h-1zM174,280h1v1h-1zM174,308h1v1h-1zM174,337h1v1h-1zM174,365h1v1h-1zM174,394h1v1h-1zM174,422h1v1h-1zM174,451h1v1h-1zM174,480h1v1h-1zM174,508h1v1h-1zM174,537h1v1h-1zM174,565h1v1h-1zM174,594h1v1h-1zM203,51h1v1h-1zM203,79h1v1h-1zM203,108h1v1h-1zM203,137h1v1h-1zM203,165h1v1h-1zM203,194h1v1h-1zM203,222h1v1h-1zM203,251h1v1h-1zM203,280h1v1h-1zM203,308h1v1h-1zM203,337h1v1h-1zM203,365h1v1h-1zM203,394h1v1h-1zM203,422h1v1h-1zM203,451h1v1h-1zM203,480h1v1h-1zM203,508h1v1h-1zM203,537h1v1h-1zM203,565h1v1h-1zM203,594h1v1h-1zM232,51h1v1h-1zM232,79h1v1h-1zM232,108h1v1h-1zM232,137h1v1h-1zM232,165h1v1h-1zM232,194h1v1h-1zM232,222h1v1h-1zM232,251h1v1h-1zM232,280h1v1h-1zM232,308h1v1h-1zM232,337h1v1h-1zM232,365h1v1h-1zM232,394h1v1h-1zM232,422h1v1h-1zM232,451h1v1h-1zM232,480h1v1h-1zM232,508h1v1h-1zM232,537h1v1h-1zM232,565h1v1h-1zM232,594h1v1h-1zM261,51h1v1h-1zM261,79h1v1h-1zM261,108h1v1h-1zM261,137h1v1h-1zM261,165h1v1h-1zM261,194h1v1h-1zM261,222h1v1h-1zM261,251h1v1h-1zM261,280h1v1h-1zM261,308h1v1h-1zM261,337h1v1h-1zM261,365h1v1h-1zM261,394h1v1h-1zM261,422h1v1h-1zM261,451h1v1h-1zM261,480h1v1h-1zM261,508h1v1h-1zM261,537h1v1h-1zM261,565h1v1h-1zM261,594h1v1h-1zM290,51h1v1h-1zM290,79h1v1h-1zM290,108h1v1h-1zM290,137h1v1h-1zM290,165h1v1h-1zM290,194h1v1h-1zM290,222h1v1h-1zM290,251h1v1h-1zM290,280h1v1h-1zM290,308h1v1h-1zM290,337h1v1h-1zM290,365h1v1h-1zM290,394h1v1h-1zM290,422h1v1h-1zM290,451h1v1h-1zM290,480h1v1h-1zM290,508h1v1h-1zM290,537h1v1h-1zM290,565h1v1h-1zM290,594h1v1h-1zM318,51h1v1h-1zM318,79h1v1h-1zM318,108h1v1h-1zM318,137h1v1h-1zM318,165h1v1h-1zM318,194h1v1h-1zM318,222h1v1h-1zM318,251h1v1h-1zM318,280h1v1h-1zM318,308h1v1h-1zM318,337h1v1h-1zM318,365h1v1h-1zM318,394h1v1h-1zM318,422h1v1h-1zM318,451h1v1h-1zM318,480h1v1h-1zM318,508h1v1h-1zM318,537h1v1h-1zM318,565h1v1h-1zM318,594h1v1h-1zM347,51h1v1h-1zM347,79h1v1h-1zM347,108h1v1h-1zM347,137h1v1h-1zM347,165h1v1h-1zM347,194h1v1h-1zM347,222h1v1h-1zM347,251h1v1h-1zM347,280h1v1h-1zM347,308h1v1h-1zM347,337h1v1h-1zM347,365h1v1h-1zM347,394h1v1h-1zM347,422h1v1h-1zM347,451h1v1h-1zM347,480h1v1h-1zM347,508h1v1h-1zM347,537h1v1h-1zM347,565h1v1h-1zM347,594h1v1h-1zM376,51h1v1h-1zM376,79h1v1h-1zM376,108h1v1h-1zM376,137h1v1h-1zM376,165h1v1h-1zM376,194h1v1h-1zM376,222h1v1h-1zM376,251h1v1h-1zM376,280h1v1h-1zM376,308h1v1h-1zM376,337h1v1h-1zM376,365h1v1h-1zM376,394h1v1h-1zM376,422h1v1h-1zM376,451h1v1h-1zM376,480h1v1h-1zM376,508h1v1h-1zM376,537h1v1h-1zM376,565h1v1h-1zM376,594h1v1h-1zM405,51h1v1h-1zM405,79h1v1h-1zM405,108h1v1h-1zM405,137h1v1h-1zM405,165h1v1h-1zM405,194h1v1h-1zM405,222h1v1h-1zM405,251h1v1h-1zM405,280h1v1h-1zM405,308h1v1h-1zM405,337h1v1h-1zM405,365h1v1h-1zM405,394h1v1h-1zM405,422h1v1h-1zM405,451h1v1h-1zM405,480h1v1h-1zM405,508h1v1h-1zM405,537h1v1h-1zM405,565h1v1h-1zM405,594h1v1h-1zM434,51h1v1h-1zM434,79h1v1h-1zM434,108h1v1h-1zM434,137h1v1h-1zM434,165h1v1h-1zM434,194h1v1h-1zM434,222h1v1h-1zM434,251h1v1h-1zM434,280h1v1h-1zM434,308h1v1h-1zM434,337h1v1h-1zM434,365h1v1h-1zM434,394h1v1h-1zM434,422h1v1h-1zM434,451h1v1h-1zM434,480h1v1h-1zM434,508h1v1h-1zM434,537h1v1h-1zM434,565h1v1h-1zM434,594h1v1h-1zM463,51h1v1h-1zM463,79h1v1h-1zM463,108h1v1h-1zM463,137h1v1h-1zM463,165h1v1h-1zM463,194h1v1h-1zM463,222h1v1h-1zM463,251h1v1h-1zM463,280h1v1h-1zM463,308h1v1h-1zM463,337h1v1h-1zM463,365h1v1h-1zM463,394h1v1h-1zM463,422h1v1h-1zM463,451h1v1h-1zM463,480h1v1h-1zM463,508h1v1h-1zM463,537h1v1h-1zM463,565h1v1h-1zM463,594h1v1h-1zM492,51h1v1h-1zM492,79h1v1h-1zM492,108h1v1h-1zM492,137h1v1h-1zM492,165h1v1h-1zM492,194h1v1h-1zM492,222h1v1h-1zM492,251h1v1h-1zM492,280h1v1h-1zM492,308h1v1h-1zM492,337h1v1h-1zM492,365h1v1h-1zM492,394h1v1h-1zM492,422h1v1h-1zM492,451h1v1h-1zM492,480h1v1h-1zM492,508h1v1h-1zM492,537h1v1h-1zM492,565h1v1h-1zM492,594h1v1h-1zM521,51h1v1h-1zM521,79h1v1h-1zM521,108h1v1h-1zM521,137h1v1h-1zM521,165h1v1h-1zM521,194h1v1h-1zM521,222h1v1h-1zM521,251h1v1h-1zM521,280h1v1h-1zM521,308h1v1h-1zM521,337h1v1h-1zM521,365h1v1h-1zM521,394h1v1h-1zM521,422h1v1h-1zM521,451h1v1h-1zM521,480h1v1h-1zM521,508h1v1h-1zM521,537h1v1h-1zM521,565h1v1h-1zM521,594h1v1h-1zM550,51h1v1h-1zM550,79h1v1h-1zM550,108h1v1h-1zM550,137h1v1h-1zM550,165h1v1h-1zM550,194h1v1h-1zM550,222h1v1h-1zM550,251h1v1h-1zM550,280h1v1h-1zM550,308h1v1h-1zM550,337h1v1h-1zM550,365h1v1h-1zM550,394h1v1h-1zM550,422h1v1h-1zM550,451h1v1h-1zM550,480h1v1h-1zM550,508h1v1h-1zM550,537h1v1h-1zM550,565h1v1h-1zM550,594h1v1h-1zM579,51h1v1h-1zM579,79h1v1h-1zM579,108h1v1h-1zM579,137h1v1h-1zM579,165h1v1h-1zM579,194h1v1h-1zM579,222h1v1h-1zM579,251h1v1h-1zM579,280h1v1h-1zM579,308h1v1h-1zM579,337h1v1h-1zM579,365h1v1h-1zM579,394h1v1h-1zM579,422h1v1h-1zM579,451h1v1h-1zM579,480h1v1h-1zM579,508h1v1h-1zM579,537h1v1h-1zM579,565h1v1h-1zM579,594h1v1h-1zM608,51h1v1h-1zM608,79h1v1h-1zM608,108h1v1h-1zM608,137h1v1h-1zM608,165h1v1h-1zM608,194h1v1h-1zM608,222h1v1h-1zM608,251h1v1h-1zM608,280h1v1h-1zM608,308h1v1h-1zM608,337h1v1h-1zM608,365h1v1h-1zM608,394h1v1h-1zM608,422h1v1h-1zM608,451h1v1h-1zM608,480h1v1h-1zM608,508h1v1h-1zM608,537h1v1h-1zM608,565h1v1h-1zM608,594h1v1h-1zM637,51h1v1h-1zM637,79h1v1h-1zM637,108h1v1h-1zM637,137h1v1h-1zM637,165h1v1h-1zM637,194h1v1h-1zM637,222h1v1h-1zM637,251h1v1h-1zM637,280h1v1h-1zM637,308h1v1h-1zM637,337h1v1h-1zM637,365h1v1h-1zM637,394h1v1h-1zM637,422h1v1h-1zM637,451h1v1h-1zM637,480h1v1h-1zM637,508h1v1h-1zM637,537h1v1h-1zM637,565h1v1h-1zM637,594h1v1h-1zM666,51h1v1h-1zM666,79h1v1h-1zM666,108h1v1h-1zM666,137h1v1h-1zM666,165h1v1h-1zM666,194h1v1h-1zM666,222h1v1h-1zM666,251h1v1h-1zM666,280h1v1h-1zM666,308h1v1h-1zM666,337h1v1h-1zM666,365h1v1h-1zM666,394h1v1h-1zM666,422h1v1h-1zM666,451h1v1h-1zM666,480h1v1h-1zM666,508h1v1h-1zM666,537h1v1h-1zM666,565h1v1h-1zM666,594h1v1h-1zM695,51h1v1h-1zM695,79h1v1h-1zM695,108h1v1h-1zM695,137h1v1h-1zM695,165h1v1h-1zM695,194h1v1h-1zM695,222h1v1h-1zM695,251h1v1h-1zM695,280h1v1h-1zM695,308h1v1h-1zM695,337h1v1h-1zM695,365h1v1h-1zM695,394h1v1h-1zM695,422h1v1h-1zM695,451h1v1h-1zM695,480h1v1h-1zM695,508h1v1h-1zM695,537h1v1h-1zM695,565h1v1h-1zM695,594h1v1h-1zM724,51h1v1h-1zM724,79h1v1h-1zM724,108h1v1h-1zM724,137h1v1h-1zM724,165h1v1h-1zM724,194h1v1h-1zM724,222h1v1h-1zM724,251h1v1h-1zM724,280h1v1h-1zM724,308h1v1h-1zM724,337h1v1h-1zM724,365h1v1h-1zM724,394h1v1h-1zM724,422h1v1h-1zM724,451h1v1h-1zM724,480h1v1h-1zM724,508h1v1h-1zM724,537h1v1h-1zM724,565h1v1h-1zM724,594h1v1h-1zM753,51h1v1h-1zM753,79h1v1h-1zM753,108h1v1h-1zM753,137h1v1h-1zM753,165h1v1h-1zM753,194h1v1h-1zM753,222h1v1h-1zM753,251h1v1h-1zM753,280h1v1h-1zM753,308h1v1h-1zM753,337h1v1h-1zM753,365h1v1h-1zM753,394h1v1h-1zM753,422h1v1h-1zM753,451h1v1h-1zM753,480h1v1h-1zM753,508h1v1h-1zM753,537h1v1h-1zM753,565h1v1h-1zM753,594h1v1h-1zM782,51h1v1h-1zM782,79h1v1h-1zM782,108h1v1h-1zM782,137h1v1h-1zM782,165h1v1h-1zM782,194h1v1h-1zM782,222h1v1h-1zM782,251h1v1h-1zM782,280h1v1h-1zM782,308h1v1h-1zM782,337h1v1h-1zM782,365h1v1h-1zM782,394h1v1h-1zM782,422h1v1h-1zM782,451h1v1h-1zM782,480h1v1h-1zM782,508h1v1h-1zM782,537h1v1h-1zM782,565h1v1h-1zM782,594h1v1h-1zM811,51h1v1h-1zM811,79h1v1h-1zM811,108h1v1h-1zM811,137h1v1h-1zM811,165h1v1h-1zM811,194h1v1h-1zM811,222h1v1h-1zM811,251h1v1h-1zM811,280h1v1h-1zM811,308h1v1h-1zM811,337h1v1h-1zM811,365h1v1h-1zM811,394h1v1h-1zM811,422h1v1h-1zM811,451h1v1h-1zM811,480h1v1h-1zM811,508h1v1h-1zM811,537h1v1h-1zM811,565h1v1h-1zM811,594h1v1h-1zM840,51h1v1h-1zM840,79h1v1h-1zM840,108h1v1h-1zM840,137h1v1h-1zM840,165h1v1h-1zM840,194h1v1h-1zM840,222h1v1h-1zM840,251h1v1h-1zM840,280h1v1h-1zM840,308h1v1h-1zM840,337h1v1h-1zM840,365h1v1h-1zM840,394h1v1h-1zM840,422h1v1h-1zM840,451h1v1h-1zM840,480h1v1h-1zM840,508h1v1h-1zM840,537h1v1h-1zM840,565h1v1h-1zM840,594h1v1h-1zM869,51h1v1h-1zM869,79h1v1h-1zM869,108h1v1h-1zM869,137h1v1h-1zM869,165h1v1h-1zM869,194h1v1h-1zM869,222h1v1h-1zM869,251h1v1h-1zM869,280h1v1h-1zM869,308h1v1h-1zM869,337h1v1h-1zM869,365h1v1h-1zM869,394h1v1h-1zM869,422h1v1h-1zM869,451h1v1h-1zM869,480h1v1h-1zM869,508h1v1h-1zM869,537h1v1h-1zM869,565h1v1h-1zM869,594h1v1h-1zM897,51h1v1h-1zM897,79h1v1h-1zM897,108h1v1h-1zM897,137h1v1h-1zM897,165h1v1h-1zM897,194h1v1h-1zM897,222h1v1h-1zM897,251h1v1h-1zM897,280h1v1h-1zM897,308h1v1h-1zM897,337h1v1h-1zM897,365h1v1h-1zM897,394h1v1h-1zM897,422h1v1h-1zM897,451h1v1h-1zM897,480h1v1h-1zM897,508h1v1h-1zM897,537h1v1h-1zM897,565h1v1h-1zM897,594h1v1h-1zM926,51h1v1h-1zM926,79h1v1h-1zM926,108h1v1h-1zM926,137h1v1h-1zM926,165h1v1h-1zM926,194h1v1h-1zM926,222h1v1h-1zM926,251h1v1h-1zM926,280h1v1h-1zM926,308h1v1h-1zM926,337h1v1h-1zM926,365h1v1h-1zM926,394h1v1h-1zM926,422h1v1h-1zM926,451h1v1h-1zM926,480h1v1h-1zM926,508h1v1h-1zM926,537h1v1h-1zM926,565h1v1h-1zM926,594h1v1h-1zM955,51h1v1h-1zM955,79h1v1h-1zM955,108h1v1h-1zM955,137h1v1h-1zM955,165h1v1h-1zM955,194h1v1h-1zM955,222h1v1h-1zM955,251h1v1h-1zM955,280h1v1h-1zM955,308h1v1h-1zM955,337h1v1h-1zM955,365h1v1h-1zM955,394h1v1h-1zM955,422h1v1h-1zM955,451h1v1h-1zM955,480h1v1h-1zM955,508h1v1h-1zM955,537h1v1h-1zM955,565h1v1h-1zM955,594h1v1h-1zM984,51h1v1h-1zM984,79h1v1h-1zM984,108h1v1h-1zM984,137h1v1h-1zM984,165h1v1h-1zM984,194h1v1h-1zM984,222h1v1h-1zM984,251h1v1h-1zM984,280h1v1h-1zM984,308h1v1h-1zM984,337h1v1h-1zM984,365h1v1h-1zM984,394h1v1h-1zM984,422h1v1h-1zM984,451h1v1h-1zM984,480h1v1h-1zM984,508h1v1h-1zM984,537h1v1h-1zM984,565h1v1h-1zM984,594h1v1h-1zM1013,51h1v1h-1zM1013,79h1v1h-1zM1013,108h1v1h-1zM1013,137h1v1h-1zM1013,165h1v1h-1zM1013,194h1v1h-1zM1013,222h1v1h-1zM1013,251h1v1h-1zM1013,280h1v1h-1zM1013,308h1v1h-1zM1013,337h1v1h-1zM1013,365h1v1h-1zM1013,394h1v1h-1zM1013,422h1v1h-1zM1013,451h1v1h-1zM1013,480h1v1h-1zM1013,508h1v1h-1zM1013,537h1v1h-1zM1013,565h1v1h-1zM1013,594h1v1h-1zM1042,51h1v1h-1zM1042,79h1v1h-1zM1042,108h1v1h-1zM1042,137h1v1h-1zM1042,165h1v1h-1zM1042,194h1v1h-1zM1042,222h1v1h-1zM1042,251h1v1h-1zM1042,280h1v1h-1zM1042,308h1v1h-1zM1042,337h1v1h-1zM1042,365h1v1h-1zM1042,394h1v1h-1zM1042,422h1v1h-1zM1042,451h1v1h-1zM1042,480h1v1h-1zM1042,508h1v1h-1zM1042,537h1v1h-1zM1042,565h1v1h-1zM1042,594h1v1h-1zM1071,51h1v1h-1zM1071,79h1v1h-1zM1071,108h1v1h-1zM1071,137h1v1h-1zM1071,165h1v1h-1zM1071,194h1v1h-1zM1071,222h1v1h-1zM1071,251h1v1h-1zM1071,280h1v1h-1zM1071,308h1v1h-1zM1071,337h1v1h-1zM1071,365h1v1h-1zM1071,394h1v1h-1zM1071,422h1v1h-1zM1071,451h1v1h-1zM1071,480h1v1h-1zM1071,508h1v1h-1zM1071,537h1v1h-1zM1071,565h1v1h-1zM1071,594h1v1h-1zM1100,51h1v1h-1zM1100,79h1v1h-1zM1100,108h1v1h-1zM1100,137h1v1h-1zM1100,165h1v1h-1zM1100,194h1v1h-1zM1100,222h1v1h-1zM1100,251h1v1h-1zM1100,280h1v1h-1zM1100,308h1v1h-1zM1100,337h1v1h-1zM1100,365h1v1h-1zM1100,394h1v1h-1zM1100,422h1v1h-1zM1100,451h1v1h-1zM1100,480h1v1h-1zM1100,508h1v1h-1zM1100,537h1v1h-1zM1100,565h1v1h-1zM1100,594h1v1h-1zM1129,51h1v1h-1zM1129,79h1v1h-1zM1129,108h1v1h-1zM1129,137h1v1h-1zM1129,165h1v1h-1zM1129,194h1v1h-1zM1129,222h1v1h-1zM1129,251h1v1h-1zM1129,280h1v1h-1zM1129,308h1v1h-1zM1129,337h1v1h-1zM1129,365h1v1h-1zM1129,394h1v1h-1zM1129,422h1v1h-1zM1129,451h1v1h-1zM1129,480h1v1h-1zM1129,508h1v1h-1zM1129,537h1v1h-1zM1129,565h1v1h-1zM1129,594h1v1h-1z" fill="#000"/><path d="M0.5,22.5 H1158" stroke="#333" stroke-width="1.2" stroke-dasharray="18,6"/><path d="M449.5,0 V617" stroke="#333" stroke-width="1.2" stroke-dasharray="18,6" stroke-dashoffset="1.5"/></svg><svg class="a" style="left:0px;top:0px;pointer-events:none" width="1280" height="800" viewBox="0 0 1280 800"><rect x="365" y="254" width="115" height="86" fill="none" stroke="#000" stroke-width="6"/><circle cx="365" cy="254" r="1.6" fill="#fff"/><circle cx="480" cy="254" r="1.6" fill="#fff"/><circle cx="365" cy="340" r="1.6" fill="#fff"/><circle cx="480" cy="340" r="1.6" fill="#fff"/><rect x="394" y="254.5" width="57" height="58" fill="none" stroke="#0808B0" stroke-width="2"/><path d="M394,254 h57" stroke="#E0E050" stroke-width="1.5"/><path d="M368,283 h26 M451,283 h26 M422.5,313 v26" stroke="#0808B0" stroke-width="2"/><text x="398" y="286" font-size="6" fill="#777" font-family="Liberation Sans">1</text><text x="443" y="286" font-size="6" fill="#777" font-family="Liberation Sans">2</text><text x="417" y="308" font-size="5.5" fill="#888" font-family="Liberation Sans">Ref</text><path d="M365,277 l6,6 l-6,6 l-6,-6 z" fill="none" stroke="#e33" stroke-width="0.8"/><path d="M365,278 l5,5 l-5,5 l-5,-5 z" fill="none" stroke="#2bb" stroke-width="0.8"/><rect x="362" y="280" width="6" height="6" fill="#22CCCC"/><path d="M480,277 l6,6 l-6,6 l-6,-6 z" fill="none" stroke="#e33" stroke-width="0.8"/><path d="M480,278 l5,5 l-5,5 l-5,-5 z" fill="none" stroke="#2bb" stroke-width="0.8"/><rect x="477" y="280" width="6" height="6" fill="#22CCCC"/><path d="M422,334 l6,6 l-6,6 l-6,-6 z" fill="none" stroke="#e33" stroke-width="0.8"/><path d="M422,335 l5,5 l-5,5 l-5,-5 z" fill="none" stroke="#2bb" stroke-width="0.8"/><rect x="419" y="337" width="6" height="6" fill="#22CCCC"/><path d="M369,280 l2,1 M369,286 l2,-1" stroke="#000080" stroke-width="1.5"/><text x="389.5" y="364.5" font-size="17.6" fill="#3C90EC" stroke="#3C90EC" stroke-width="0.6" font-family="Liberation Sans">S2P</text><text x="389.5" y="388.5" font-size="17.6" fill="#1010B8" stroke="#1010B8" stroke-width="0.6" font-family="Liberation Sans">SNP1</text><text x="389.5" y="411" font-size="17.6" fill="#000070" stroke="#000070" stroke-width="0.6" letter-spacing="0.4" font-family="Liberation Sans">File=</text><path d="M332,370.5 h9 M336.5,366 v9" stroke="#000" stroke-width="1"/></svg><div class="a sbtrack" style="left:1262px;top:118px;width:16px;height:601px"></div><div class="a" style="left:1262px;top:118px;width:16px;height:16px;background:#D4D0C8;border-top:1px solid #fff;border-left:1px solid #fff;border-right:1px solid #404040;border-bottom:1px solid #404040;box-shadow:inset -1px -1px 0 #808080;"><svg class="a" style="left:0px;top:0px;" width="14" height="14" viewBox="0 0 14 14"><path d="M3.5,9 h7 l-3.5,-4 z" fill="#000"/></svg></div><div class="a" style="left:1262px;top:484px;width:16px;height:16px;background:#D4D0C8;border-top:1px solid #fff;border-left:1px solid #fff;border-right:1px solid #404040;border-bottom:1px solid #404040;box-shadow:inset -1px -1px 0 #808080;"></div><div class="a" style="left:1262px;top:719px;width:16px;height:16px;background:#D4D0C8;border-top:1px solid #fff;border-left:1px solid #fff;border-right:1px solid #404040;border-bottom:1px solid #404040;box-shadow:inset -1px -1px 0 #808080;"><svg class="a" style="left:0px;top:0px;" width="14" height="14" viewBox="0 0 14 14"><path d="M3.5,5 h7 l-3.5,4 z" fill="#000"/></svg></div><div class="a sbtrack" style="left:104px;top:735px;width:1143px;height:15px"></div><div class="a" style="left:104px;top:734px;width:16px;height:16px;background:#D4D0C8;border-top:1px solid #fff;border-left:1px solid #fff;border-right:1px solid #404040;border-bottom:1px solid #404040;box-shadow:inset -1px -1px 0 #808080;"><svg class="a" style="left:0px;top:0px;" width="14" height="14" viewBox="0 0 14 14"><path d="M9,3.5 v7 l-4,-3.5 z" fill="#000"/></svg></div><div class="a" style="left:927px;top:735px;width:16px;height:15px;background:#D4D0C8;border-top:1px solid #fff;border-left:1px solid #fff;border-right:1px solid #404040;border-bottom:1px solid #404040;box-shadow:inset -1px -1px 0 #808080;"></div><div class="a" style="left:1247px;top:735px;width:16px;height:15px;background:#D4D0C8;border-top:1px solid #fff;border-left:1px solid #fff;border-right:1px solid #404040;border-bottom:1px solid #404040;box-shadow:inset -1px -1px 0 #808080;"><svg class="a" style="left:0px;top:0px;" width="14" height="14" viewBox="0 0 14 14"><path d="M5,3.5 v7 l4,-3.5 z" fill="#000"/></svg></div><div class="a" style="left:1262px;top:735px;width:16px;height:15px;background:#D4D0C8;"></div><div class="a" style="left:103px;top:750px;width:1175px;height:1px;background:#000;"></div>
<div class="a" style="left:571px;top:117px;width:396px;height:477px;background:#D4D0C8;border-top:1px solid #D4D0C8;border-left:1px solid #D4D0C8;border-right:1px solid #404040;border-bottom:1px solid #404040;box-shadow:inset 1px 1px 0 #fff,inset -1px -1px 0 #808080"></div><div class="a" style="left:574px;top:119px;width:390px;height:18px;background:linear-gradient(to right,#808080,#C0C0C0);"></div><div class="a" style="left:576px;top:122px;font-size:12px;color:#D4D0C8;white-space:nowrap;line-height:1;font-weight:bold">2-Port S-parameter File:1</div><div class="a" style="left:946px;top:121px;width:16px;height:14px;background:#D4D0C8;border-top:1px solid #fff;border-left:1px solid #fff;border-right:1px solid #404040;border-bottom:1px solid #404040;box-shadow:inset -1px -1px 0 #808080;"><svg class="a" style="left:1px;top:1px;" width="12" height="10" viewBox="0 0 12 10"><path d="M2.5,1.5 L9.5,8.5 M9.5,1.5 L2.5,8.5" stroke="#000" stroke-width="1.8"/></svg></div><div class="a" style="left:587px;top:146px;font-size:11px;color:#000;white-space:nowrap;line-height:1;letter-spacing:-0.2px">Instance Name</div><div class="a" style="left:587px;top:170px;font-size:11px;color:#000;white-space:nowrap;line-height:1;letter-spacing:-0.2px">S2P Instance Name</div><div class="a" style="left:587px;top:184px;width:364px;height:18px;background:#fff;border-top:1px solid #808080;border-left:1px solid #808080;border-right:1px solid #fff;border-bottom:1px solid #fff;box-shadow:inset 1px 1px 0 #404040,inset -1px -1px 0 #D4D0C8;"></div><div class="a" style="left:590px;top:188px;font-size:11px;color:#000;white-space:nowrap;line-height:1;letter-spacing:-0.2px">SNP1</div><div class="a" style="left:592px;top:230px;width:357px;height:319px;border-top:1px solid #fff;border-left:1px solid #fff;border-right:1px solid #404040;border-bottom:1px solid #404040;box-shadow:inset -1px -1px 0 #808080"></div><div class="a" style="left:643px;top:215px;width:88px;height:16px;background:#D4D0C8;border-top:1px solid #fff;border-left:1px solid #fff;border-right:1px solid #404040;box-shadow:inset -1px 0 0 #808080;border-radius:2px 2px 0 0"></div><div class="a" style="left:647px;top:218px;font-size:12px;color:#000;white-space:nowrap;line-height:1;font-family:'Liberation Mono';font-weight:normal;-webkit-text-stroke:0.45px #000;letter-spacing:-1.2px">Interpolation</div><div class="a" style="left:731px;top:215px;width:72px;height:16px;background:#D4D0C8;border-top:1px solid #fff;border-left:1px solid #fff;border-right:1px solid #404040;box-shadow:inset -1px 0 0 #808080;border-radius:2px 2px 0 0"></div><div class="a" style="left:735px;top:218px;font-size:12px;color:#000;white-space:nowrap;line-height:1;font-family:'Liberation Mono';font-weight:normal;-webkit-text-stroke:0.45px #000;letter-spacing:-1.2px">Parameters</div><div class="a" style="left:803px;top:215px;width:55px;height:16px;background:#D4D0C8;border-top:1px solid #fff;border-left:1px solid #fff;border-right:1px solid #404040;box-shadow:inset -1px 0 0 #808080;border-radius:2px 2px 0 0"></div><div class="a" style="left:807px;top:218px;font-size:12px;color:#000;white-space:nowrap;line-height:1;font-family:'Liberation Mono';font-weight:normal;-webkit-text-stroke:0.45px #000;letter-spacing:-1.2px">Display</div><div class="a" style="left:592px;top:212px;width:52px;height:20px;background:#D4D0C8;border-top:1px solid #fff;border-left:1px solid #fff;border-right:1px solid #404040;box-shadow:inset -1px 0 0 #808080;border-radius:2px 2px 0 0"></div><div class="a" style="left:598px;top:216px;font-size:12px;color:#000;white-space:nowrap;line-height:1;font-family:'Liberation Mono';font-weight:normal;-webkit-text-stroke:0.45px #000;letter-spacing:-1.2px">File</div><div class="a" style="left:649px;top:247px;width:239px;height:208px;border:1px solid #808080;box-shadow:inset 1px 1px 0 #fff,1px 1px 0 #fff"></div><div class="a" style="left:656px;top:241px;height:12px;padding:0 2px;background:#D4D0C8;font-size:11px;line-height:12px;letter-spacing:-0.2px;white-space:nowrap">File Name</div><div class="a" style="left:654px;top:263px;font-size:11px;color:#000;white-space:nowrap;line-height:1;letter-spacing:-0.25px">Parameter Entry Mode</div><div class="a" style="left:653px;top:278px;width:233px;height:19px;background:#fff;border-top:1px solid #808080;border-left:1px solid #808080;border-right:1px solid #fff;border-bottom:1px solid #fff;box-shadow:inset 1px 1px 0 #404040,inset -1px -1px 0 #D4D0C8;"></div><div class="a" style="left:657px;top:282px;font-size:11px;color:#000;white-space:nowrap;line-height:1;letter-spacing:-0.25px">Network parameter filename</div><div class="a" style="left:868px;top:280px;width:16px;height:15px;background:#D4D0C8;border-top:1px solid #fff;border-left:1px solid #fff;border-right:1px solid #404040;border-bottom:1px solid #404040;box-shadow:inset -1px -1px 0 #808080;"></div><svg class="a" style="left:868px;top:280px;" width="16" height="15" viewBox="0 0 16 15"><path d="M4,6.0 h7 l-3.5,3.5 z" fill="#000"/></svg><div class="a" style="left:677px;top:308px;font-size:11px;color:#000;white-space:nowrap;line-height:1;letter-spacing:-0.2px">File Name</div><div class="a" style="left:681px;top:335px;width:112px;height:17px;background:#fff;border-top:1px solid #808080;border-left:1px solid #808080;border-right:1px solid #fff;border-bottom:1px solid #fff;box-shadow:inset 1px 1px 0 #404040,inset -1px -1px 0 #D4D0C8;"></div><div class="a" style="left:798px;top:333px;width:60px;height:21px;background:#D4D0C8;border-top:1px solid #fff;border-left:1px solid #fff;border-right:1px solid #404040;border-bottom:1px solid #404040;box-shadow:inset -1px -1px 0 #808080;"></div><div class="a" style="left:798px;top:333px;width:60px;height:21px;line-height:20px;text-align:center;font-size:11px;color:#000;white-space:nowrap;letter-spacing:-0.2px;">Browse...</div><div class="a" style="left:676px;top:359px;width:186px;height:21px;background:#D4D0C8;border-top:1px solid #fff;border-left:1px solid #fff;border-right:1px solid #404040;border-bottom:1px solid #404040;box-shadow:inset -1px -1px 0 #808080;"></div><div class="a" style="left:676px;top:359px;width:186px;height:21px;line-height:20px;text-align:center;font-size:11px;color:#000;white-space:nowrap;letter-spacing:-0.2px;">Edit...</div><div class="a" style="left:676px;top:383px;width:186px;height:21px;background:#D4D0C8;border-top:1px solid #fff;border-left:1px solid #fff;border-right:1px solid #404040;border-bottom:1px solid #404040;box-shadow:inset -1px -1px 0 #808080;"></div><div class="a" style="left:676px;top:383px;width:186px;height:21px;line-height:20px;text-align:center;font-size:11px;color:#000;white-space:nowrap;letter-spacing:-0.2px;">Copy template...</div><div class="a" style="left:676px;top:407px;width:186px;height:21px;background:#D4D0C8;border-top:1px solid #fff;border-left:1px solid #fff;border-right:1px solid #404040;border-bottom:1px solid #404040;box-shadow:inset -1px -1px 0 #808080;"></div><div class="a" style="left:676px;top:407px;width:186px;height:21px;line-height:20px;text-align:center;font-size:11px;color:#A0A0A0;white-space:nowrap;letter-spacing:-0.2px;text-shadow:1px 1px 0 #fff;">Data files list...</div><div class="a" style="left:649px;top:460px;font-size:11px;color:#000;white-space:nowrap;line-height:1;letter-spacing:-0.2px">File Type</div><div class="a" style="left:649px;top:475px;width:239px;height:20px;background:#fff;border-top:1px solid #808080;border-left:1px solid #808080;border-right:1px solid #fff;border-bottom:1px solid #fff;box-shadow:inset 1px 1px 0 #404040,inset -1px -1px 0 #D4D0C8;"></div><div class="a" style="left:653px;top:479px;font-size:11px;color:#000;white-space:nowrap;line-height:1;letter-spacing:-0.25px">Touchstone</div><div class="a" style="left:870px;top:477px;width:16px;height:16px;background:#D4D0C8;border-top:1px solid #fff;border-left:1px solid #fff;border-right:1px solid #404040;border-bottom:1px solid #404040;box-shadow:inset -1px -1px 0 #808080;"></div><svg class="a" style="left:870px;top:477px;" width="16" height="16" viewBox="0 0 16 16"><path d="M4,6.5 h7 l-3.5,3.5 z" fill="#000"/></svg><div class="a" style="left:654px;top:501px;font-size:11px;color:#000;white-space:nowrap;line-height:1;letter-spacing:-0.2px">Block Name</div><div class="a" style="left:654px;top:516px;width:148px;height:18px;background:#fff;border-top:1px solid #808080;border-left:1px solid #808080;border-right:1px solid #fff;border-bottom:1px solid #fff;box-shadow:inset 1px 1px 0 #404040,inset -1px -1px 0 #D4D0C8;"></div><div class="a" style="left:806px;top:514px;width:79px;height:21px;background:#D4D0C8;border-top:1px solid #fff;border-left:1px solid #fff;border-right:1px solid #404040;border-bottom:1px solid #404040;box-shadow:inset -1px -1px 0 #808080;"></div><div class="a" style="left:806px;top:514px;width:79px;height:21px;line-height:20px;text-align:center;font-size:11px;color:#A0A0A0;white-space:nowrap;letter-spacing:-0.2px;text-shadow:1px 1px 0 #fff;">View Dataset</div><div class="a" style="left:578px;top:560px;width:383px;height:1px;background:#808080;"></div><div class="a" style="left:578px;top:561px;width:383px;height:1px;background:#fff;"></div><div class="a" style="left:603px;top:566px;width:49px;height:21px;background:#D4D0C8;border-top:1px solid #fff;border-left:1px solid #fff;border-right:1px solid #404040;border-bottom:1px solid #404040;box-shadow:inset -1px -1px 0 #808080;"></div><div class="a" style="left:603px;top:566px;width:49px;height:21px;line-height:20px;text-align:center;font-size:11px;color:#000;white-space:nowrap;letter-spacing:-0.2px;">OK</div><div class="a" style="left:696px;top:566px;width:50px;height:21px;background:#D4D0C8;border-top:1px solid #fff;border-left:1px solid #fff;border-right:1px solid #404040;border-bottom:1px solid #404040;box-shadow:inset -1px -1px 0 #808080;"></div><div class="a" style="left:696px;top:566px;width:50px;height:21px;line-height:20px;text-align:center;font-size:11px;color:#000;white-space:nowrap;letter-spacing:-0.2px;">Apply</div><div class="a" style="left:790px;top:566px;width:50px;height:21px;background:#D4D0C8;border-top:1px solid #fff;border-left:1px solid #fff;border-right:1px solid #404040;border-bottom:1px solid #404040;box-shadow:inset -1px -1px 0 #808080;"></div><div class="a" style="left:790px;top:566px;width:50px;height:21px;line-height:20px;text-align:center;font-size:11px;color:#000;white-space:nowrap;letter-spacing:-0.2px;">Cancel</div><div class="a" style="left:884px;top:566px;width:50px;height:21px;background:#D4D0C8;border-top:1px solid #fff;border-left:1px solid #fff;border-right:1px solid #404040;border-bottom:1px solid #404040;box-shadow:inset -1px -1px 0 #808080;"></div><div class="a" style="left:884px;top:566px;width:50px;height:21px;line-height:20px;text-align:center;font-size:11px;color:#000;white-space:nowrap;letter-spacing:-0.2px;">Help</div>
<div class="a" style="left:103px;top:751px;width:1175px;height:18px;background:#D4D0C8;"></div><div class="a" style="left:105px;top:755px;font-size:11px;color:#000;white-space:nowrap;line-height:1;letter-spacing:-0.17px">Edit Param: Enter component location</div><div class="a" style="left:104px;top:752px;width:641px;height:16px;border-top:1px solid #A0A0A0;border-left:1px solid #A0A0A0;border-right:1px solid #fff;border-bottom:1px solid #fff"></div><div class="a" style="left:2px;top:766px;width:102px;height:1px;background:#808080;"></div><div class="a" style="left:747px;top:752px;width:112px;height:16px;border-top:1px solid #808080;border-left:1px solid #808080;border-right:1px solid #fff;border-bottom:1px solid #fff"></div><div class="a" style="left:749px;top:755px;font-size:11px;color:#000;white-space:nowrap;line-height:1;letter-spacing:-0.6px">S2P SNP1</div><div class="a" style="left:860px;top:752px;width:63px;height:16px;border-top:1px solid #808080;border-left:1px solid #808080;border-right:1px solid #fff;border-bottom:1px solid #fff"></div><div class="a" style="left:862px;top:755px;font-size:11px;color:#C03080;white-space:nowrap;line-height:1;letter-spacing:-0.3px">wire</div><div class="a" style="left:924px;top:752px;width:105px;height:16px;border-top:1px solid #808080;border-left:1px solid #808080;border-right:1px solid #fff;border-bottom:1px solid #fff"></div><div class="a" style="left:926px;top:755px;font-size:11px;color:#000;white-space:nowrap;line-height:1;letter-spacing:0px">1.875, 2.000</div><div class="a" style="left:1030px;top:752px;width:105px;height:16px;border-top:1px solid #808080;border-left:1px solid #808080;border-right:1px solid #fff;border-bottom:1px solid #fff"></div><div class="a" style="left:1032px;top:755px;font-size:11px;color:#000;white-space:nowrap;line-height:1;letter-spacing:0px">1.125, 1.250</div><div class="a" style="left:1136px;top:752px;width:27px;height:16px;border-top:1px solid #808080;border-left:1px solid #808080;border-right:1px solid #fff;border-bottom:1px solid #fff"></div><div class="a" style="left:1138px;top:755px;font-size:11px;color:#000;white-space:nowrap;line-height:1;letter-spacing:-0.3px">in</div><div class="a" style="left:1165px;top:752px;width:34px;height:16px;border-top:1px solid #808080;border-left:1px solid #808080;border-right:1px solid #fff;border-bottom:1px solid #fff"></div><div class="a" style="left:1167px;top:755px;font-size:11px;color:#000;white-space:nowrap;line-height:1;letter-spacing:-0.3px">A/RF</div><div class="a" style="left:1201px;top:752px;width:76px;height:16px;border-top:1px solid #808080;border-left:1px solid #808080;border-right:1px solid #fff;border-bottom:1px solid #fff"></div><div class="a" style="left:1203px;top:755px;font-size:11px;color:#000;white-space:nowrap;line-height:1;letter-spacing:-0.6px">SimSchem</div>
<div class="a" style="left:0px;top:769px;width:1280px;height:31px;background:#D4D0C8;"></div><div class="a" style="left:0px;top:770px;width:1280px;height:1px;background:#fff;"></div><div class="a" style="left:2px;top:774px;width:48px;height:22px;background:#D4D0C8;border-top:1px solid #fff;border-left:1px solid #fff;border-right:1px solid #404040;border-bottom:1px solid #404040;box-shadow:inset -1px -1px 0 #808080;"></div><svg class="a" style="left:5px;top:777px;" width="18" height="16" viewBox="0 0 18 16"><path d="M2,4 q3,-2 6,0 v5 q-3,-2 -6,0 z" fill="#E8542A"/><path d="M9,4 q3,2 6,0 v5 q-3,2 -6,0 z" fill="#6ABD45"/><path d="M2,10 q3,-2 6,0 v5 q-3,-2 -6,0 z" fill="#3A7EDB"/><path d="M9,10 q3,2 6,0 v5 q-3,2 -6,0 z" fill="#F5C02A"/></svg><div class="a" style="left:22px;top:778px;font-size:13px;color:#000;white-space:nowrap;line-height:1;">开始</div><div class="a" style="left:54px;top:774px;width:60px;height:22px;background:#D4D0C8;border-top:1px solid #fff;border-left:1px solid #fff;border-right:1px solid #404040;border-bottom:1px solid #404040;box-shadow:inset -1px -1px 0 #808080;"></div><div class="a" style="left:60px;top:775px;font-size:16.5px;color:#000;white-space:nowrap;line-height:1;font-family:'Liberation Serif';letter-spacing:-0.3px"><span style="color:#3060C0">G</span><span style="color:#C83030">o</span><span style="color:#D0A020">o</span><span style="color:#3060C0">g</span><span style="color:#30A030">l</span><span style="color:#C83030">e</span></div><svg class="a" style="left:121px;top:777px;" width="18" height="17" viewBox="0 0 18 17"><rect x="1" y="4" width="15" height="11" rx="2" fill="#E87820" stroke="#B05010"/><rect x="5" y="2" width="6" height="3" fill="#E87820"/><circle cx="8.5" cy="9.5" r="4" fill="#fff"/><circle cx="8.5" cy="9.5" r="2.3" fill="#888"/></svg><svg class="a" style="left:144px;top:777px;" width="18" height="17" viewBox="0 0 18 17"><circle cx="8.5" cy="9" r="7" fill="#5A8ED8" stroke="#345"/><circle cx="8.5" cy="9" r="4.5" fill="#8CC0F0"/><path d="M5,9 h7 M8.5,5 v8" stroke="#fff" stroke-width="0.8"/></svg><svg class="a" style="left:168px;top:776px;" width="18" height="18" viewBox="0 0 18 18"><circle cx="8.5" cy="8.5" r="7" fill="#F8D040"/><path d="M3,9 q5,6 11,0 z" fill="#E02010"/><path d="M5,15 l3,3 l3,-3" fill="#4070C0"/></svg><div class="a" style="left:196px;top:777px;font-size:14px;color:#000;white-space:nowrap;line-height:1;font-weight:bold">»</div><div class="a" style="left:208px;top:774px;width:115px;height:22px;background:#D4D0C8;border-top:1px solid #fff;border-left:1px solid #fff;border-right:1px solid #404040;border-bottom:1px solid #404040;box-shadow:inset -1px -1px 0 #808080;"></div><svg class="a" style="left:212px;top:777px;" width="18" height="16" viewBox="0 0 18 16"><circle cx="9" cy="9" r="6.5" fill="#3C8FE0" stroke="#1a5fb0"/><circle cx="9" cy="9" r="3.5" fill="#fff"/><rect x="5" y="8.5" width="8" height="2" fill="#3C8FE0"/><path d="M2,14 q4,-12 15,-11" stroke="#E8B020" stroke-width="1.6" fill="none"/></svg><div class="a" style="left:231px;top:780px;font-size:11px;color:#000;white-space:nowrap;line-height:1;letter-spacing:0px">play on S para...</div><div class="a" style="left:326px;top:774px;width:115px;height:22px;background:#D4D0C8;border-top:1px solid #fff;border-left:1px solid #fff;border-right:1px solid #404040;border-bottom:1px solid #404040;box-shadow:inset -1px -1px 0 #808080;"></div><svg class="a" style="left:330px;top:777px;" width="18" height="16" viewBox="0 0 18 16"><rect x="1" y="0" width="15" height="4" fill="#1E9A1E"/><path d="M2.5,0 v3 M5.5,0 v3 M8.5,0 v3 M11.5,0 v3 M14.5,0 v3" stroke="#8f8" stroke-width="0.8"/><rect x="2.5" y="4.5" width="12" height="11" fill="#fff" stroke="#333"/><rect x="4" y="7" width="3" height="3" fill="#000"/><rect x="8" y="10" width="5" height="2" fill="#000"/></svg><div class="a" style="left:349px;top:780px;font-size:11px;color:#000;white-space:nowrap;line-height:1;letter-spacing:0px">Advanced Desi...</div><div class="a" style="left:444px;top:774px;width:115px;height:22px;background-color:#E8E6E2;background-image:repeating-conic-gradient(#fff 0 25%,#D4D0C8 0 50%);background-size:2px 2px;border-top:1px solid #404040;border-left:1px solid #404040;border-right:1px solid #fff;border-bottom:1px solid #fff;box-shadow:inset 1px 1px 0 #808080"></div><svg class="a" style="left:449px;top:778px;" width="18" height="16" viewBox="0 0 18 16"><rect x="1" y="0" width="15" height="4" fill="#1E9A1E"/><path d="M2.5,0 v3 M5.5,0 v3 M8.5,0 v3 M11.5,0 v3 M14.5,0 v3" stroke="#8f8" stroke-width="0.8"/><rect x="2.5" y="4.5" width="12" height="11" fill="#f0f0f0" stroke="#444"/><rect x="4.5" y="7.5" width="8" height="6" fill="#fff" stroke="#555"/><path d="M5,11 l2,-2 l2,2 l2,-2" stroke="#335" fill="none" stroke-width="0.8"/></svg><div class="a" style="left:468px;top:781px;font-size:11px;color:#000;white-space:nowrap;line-height:1;letter-spacing:0px">[ TXlLine_prj ] u...</div><div class="a" style="left:562px;top:774px;width:116px;height:22px;background:#D4D0C8;border-top:1px solid #fff;border-left:1px solid #fff;border-right:1px solid #404040;border-bottom:1px solid #404040;box-shadow:inset -1px -1px 0 #808080;"></div><svg class="a" style="left:566px;top:777px;" width="18" height="16" viewBox="0 0 18 16"><rect x="1" y="0" width="15" height="4" fill="#1E9A1E"/><path d="M2.5,0 v3 M5.5,0 v3 M8.5,0 v3 M11.5,0 v3 M14.5,0 v3" stroke="#8f8" stroke-width="0.8"/><rect x="2.5" y="4.5" width="12" height="11" fill="#f0f0f0" stroke="#444"/><rect x="4.5" y="7.5" width="8" height="6" fill="#fff" stroke="#555"/><path d="M5,11 l2,-2 l2,2 l2,-2" stroke="#335" fill="none" stroke-width="0.8"/></svg><div class="a" style="left:585px;top:780px;font-size:11px;color:#000;white-space:nowrap;line-height:1;letter-spacing:0px">[ TXlLine_prj ] D...</div><div class="a" style="left:685px;top:774px;width:111px;height:22px;background:#fff;border-top:1px solid #808080;border-left:1px solid #808080"></div><div class="a" style="left:690px;top:778px;font-size:13px;color:#808080;white-space:nowrap;line-height:1;">搜索桌面</div><div class="a" style="left:795px;top:774px;width:24px;height:22px;background:linear-gradient(#F4F3EE,#D8D4CC);"></div><svg class="a" style="left:798px;top:776px;" width="18" height="18" viewBox="0 0 18 18"><circle cx="10" cy="7" r="4.5" fill="#D0E8FF" stroke="#2050A0" stroke-width="1.6"/><path d="M7,10 l-4,4" stroke="#2050A0" stroke-width="2.2"/></svg><svg class="a" style="left:834px;top:777px;" width="16" height="17" viewBox="0 0 16 17"><path d="M4,1 q2,2 4,0 q2,-2 4,0" stroke="#000" fill="none"/><rect x="1.5" y="5.5" width="13" height="9" fill="#fff" stroke="#000"/><path d="M3,8 h10 M3,10.5 h10 M3,13 h10" stroke="#000" stroke-dasharray="1,1"/></svg><div class="a" style="left:862px;top:778px;width:49px;height:15px;background-color:#E0DED8;background-image:repeating-conic-gradient(#fff 0 25%,#C8C4BC 0 50%);background-size:2px 2px;border-top:1px solid #fff;border-left:1px solid #fff;border-right:1px solid #808080;border-bottom:1px solid #808080"></div><div class="a" style="left:910px;top:781px;width:4px;height:9px;background:#808080;"></div><div class="a" style="left:876px;top:780px;font-size:11px;color:#000;white-space:nowrap;line-height:1;letter-spacing:0.5px">---</div><svg class="a" style="left:918px;top:778px;" width="16" height="16" viewBox="0 0 16 16"><path d="M1,8 h4" stroke="#000" stroke-width="2"/><path d="M5,3 h5 a5,5 0 0 1 0,10 h-5 z" fill="#000"/><path d="M10,5 h5 M10,11 h5" stroke="#000" stroke-width="1.8"/></svg><div class="a" style="left:943px;top:774px;width:334px;height:23px;border-top:1px solid #808080;border-left:1px solid #808080;border-right:1px solid #fff;border-bottom:1px solid #fff"></div><div class="a" style="left:948px;top:779px;font-size:14px;color:#000;white-space:nowrap;line-height:1;font-weight:bold">«</div><svg class="a" style="left:961px;top:778px;" width="17" height="17" viewBox="0 0 17 17"><ellipse cx="6.5" cy="6" rx="5" ry="5" fill="#111"/><ellipse cx="6.5" cy="6.5" rx="3.3" ry="2.8" fill="#fff"/><circle cx="5.3" cy="6" r="0.8" fill="#000"/><circle cx="7.7" cy="6" r="0.8" fill="#000"/><path d="M1.5,10 q5,3 10,0 l-1,2 q-4,2 -8,0 z" fill="#E02010"/><path d="M1,13 l2,-2 M2,12 v3" stroke="#111" stroke-width="1.5"/><ellipse cx="5" cy="15" rx="3" ry="1.5" fill="#F0A020"/><circle cx="11.5" cy="12" r="4" fill="#F0A020"/><path d="M9.5,11 h4 M9.5,13 h4" stroke="#fff" stroke-width="0.9"/></svg><svg class="a" style="left:979px;top:778px;" width="17" height="17" viewBox="0 0 17 17"><rect x="1" y="1" width="13" height="14" rx="3" fill="#F8E8B8" stroke="#D8B060"/><circle cx="9" cy="9" r="5.5" fill="#FFE090" stroke="#C89040"/><path d="M6.5,8 l2.5,2.5 l2.5,-2.5" stroke="#8a5a10" fill="none" stroke-width="1.2"/></svg><svg class="a" style="left:998px;top:778px;" width="17" height="17" viewBox="0 0 17 17"><circle cx="6" cy="4.5" r="3.5" fill="#A8C8F0" stroke="#5080C0"/><path d="M1,15 q0,-8 5,-8 q5,0 5,8 z" fill="#A8C8F0" stroke="#5080C0"/><rect x="8" y="9" width="7" height="7" fill="#30C030" stroke="#186018"/></svg><svg class="a" style="left:1015px;top:778px;" width="17" height="17" viewBox="0 0 17 17"><circle cx="6" cy="4.5" r="3.5" fill="#A8C8F0" stroke="#5080C0"/><path d="M1,15 q0,-8 5,-8 q5,0 5,8 z" fill="#A8C8F0" stroke="#5080C0"/><rect x="8" y="9" width="7" height="7" fill="#f4f4f4" stroke="#8090A0"/></svg><svg class="a" style="left:1033px;top:778px;" width="17" height="17" viewBox="0 0 17 17"><circle cx="10" cy="6" r="5" fill="#F0F4F8" stroke="#6080B0" stroke-width="1.3"/><path d="M6,10 l-5,4" stroke="#3050C0" stroke-width="3"/></svg><svg class="a" style="left:1052px;top:778px;" width="17" height="17" viewBox="0 0 17 17"><rect x="1" y="3" width="9" height="7" fill="#304070"/><rect x="1" y="11" width="9" height="3" fill="#8090B0"/><path d="M11,1 q2,3 0,6 M13,1 q2,3 0,6" stroke="#777" fill="none"/><path d="M9,9 l6,6 M15,9 l-6,6" stroke="#E02020" stroke-width="2"/></svg><svg class="a" style="left:1070px;top:778px;" width="17" height="17" viewBox="0 0 17 17"><rect x="1" y="1" width="14" height="14" rx="3" fill="#2A80D8"/><circle cx="8" cy="8" r="4.5" fill="#fff"/><path d="M4,8 h8 M6,6 l-2,2 l2,2 M10,6 l2,2 l-2,2" stroke="#2A80D8" stroke-width="1.2" fill="none"/><rect x="8" y="11" width="8" height="5" fill="#30C030"/></svg><div class="a" style="left:1087px;top:776px;width:18px;height:19px;background:#80E080;"></div><div class="a" style="left:1089px;top:776px;font-size:10px;color:#000;white-space:nowrap;line-height:1;line-height:9px">40</div><div class="a" style="left:1088px;top:785px;font-size:10px;color:#000;white-space:nowrap;line-height:1;line-height:9px">gpu</div><svg class="a" style="left:1105px;top:777px;" width="15" height="18" viewBox="0 0 15 18"><circle cx="7" cy="8" r="6.5" fill="#F8D040" stroke="#D0A020"/><path d="M2,8 q5,6 10,0 z" fill="#E02010"/><path d="M4,14 l3,3 l3,-3" fill="#4070C0"/></svg><svg class="a" style="left:1123px;top:778px;" width="17" height="17" viewBox="0 0 17 17"><rect x="0.5" y="1.5" width="15" height="14" fill="#fff" stroke="#000"/><rect x="1" y="1" width="15" height="2" fill="#000"/><text x="8" y="13.5" font-size="11" font-weight="bold" font-family="Liberation Sans" text-anchor="middle">13</text></svg><svg class="a" style="left:1141px;top:778px;" width="16" height="17" viewBox="0 0 16 17"><circle cx="6" cy="6" r="5" fill="#555" stroke="#333"/><circle cx="6" cy="6" r="2" fill="#999"/><circle cx="11" cy="11" r="4.5" fill="#fff" stroke="#D02020" stroke-width="2"/><path d="M8,11 h6" stroke="#D02020" stroke-width="2"/></svg><svg class="a" style="left:1159px;top:777px;" width="18" height="18" viewBox="0 0 18 18"><path d="M1,9 q8,-10 16,0 z" fill="#20A040" stroke="#107020"/><path d="M9,1 v14 q0,2 -2,2 q-2,0 -2,-2" stroke="#107020" stroke-width="1.5" fill="none"/></svg><div class="a" style="left:1178px;top:781px;font-size:12px;color:#000;white-space:nowrap;line-height:1;letter-spacing:0px">5/13|四</div><div class="a" style="left:1226px;top:781px;font-size:12px;color:#000;white-space:nowrap;line-height:1;letter-spacing:0.2px">12:17:50</div>
<svg class="a" style="left:0px;top:0px;pointer-events:none" width="1280" height="800" viewBox="0 0 1280 800"><path d="M60,83 L21,83.5 Q10,89 6,98 L6,109 Q9,114 12,117 L24,126 L103,126 L110,123 L111.5,112 L111,94 L106,85 L94,77 L80,74 L66,75.6 L47,80" fill="none" stroke="#D82028" stroke-width="1.1" stroke-linejoin="round"/><path d="M76,173.4 L73.5,171.3 L65,170 M83,168.6 L89,173 L99.6,182.7 L100,201.3 L94.8,206 L57.7,207.5 L47.4,202.6 L41.9,195.8 L41.5,183.4 L44,180 L53,173.8 L59,170.3 L68,169.3 L83,168.6" fill="none" stroke="#D82028" stroke-width="1.1" stroke-linejoin="round"/><path d="M837.5,316 L830,314.4 M830,314.4 L858,313 L874,328.4 L874,338.7 L869.3,345.3 L857.2,353.7 L798,353.7 L785,349 L782.2,344.4 L782.2,331.2 L786,325.6 L798,319 L812.2,315.8 L830,314.4" fill="none" stroke="#D82028" stroke-width="1.1" stroke-linejoin="round"/></svg></body></html>
